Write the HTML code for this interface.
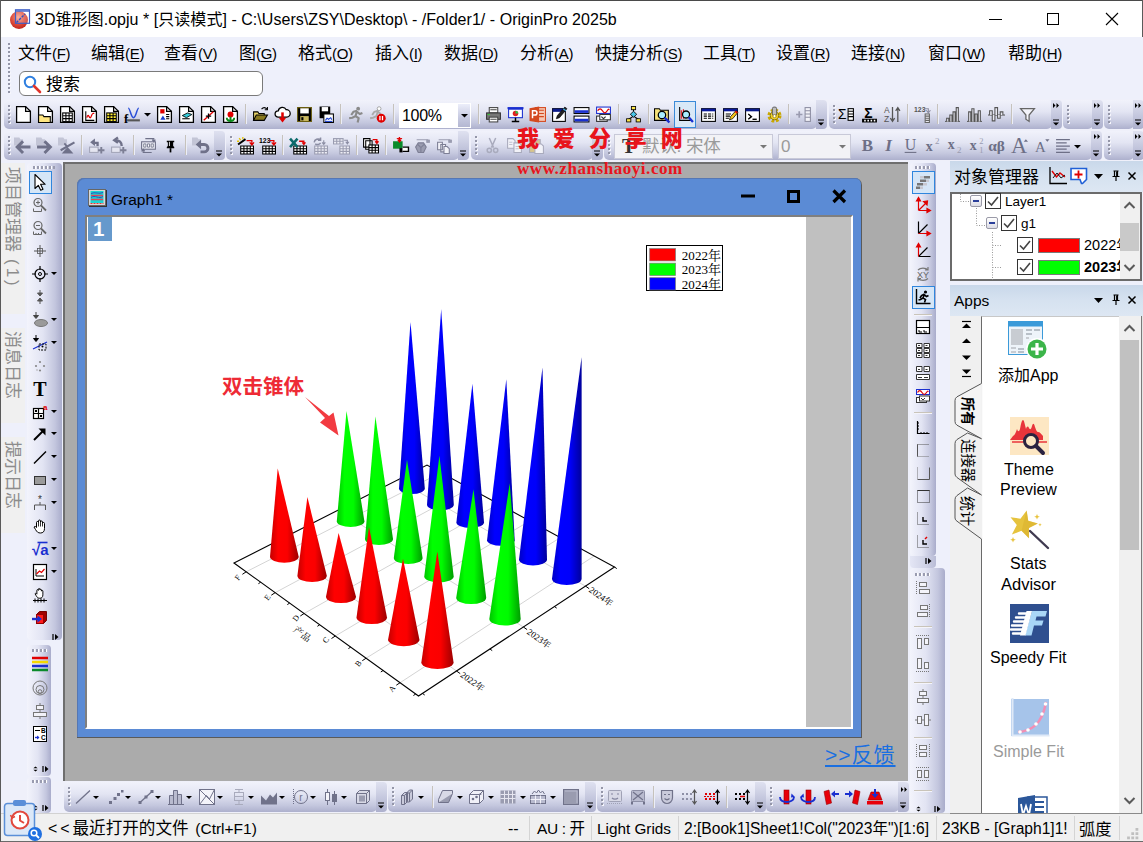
<!DOCTYPE html>
<html lang="zh-CN"><head><meta charset="utf-8"><title>OriginPro 2025b</title>
<style>
*{box-sizing:border-box;margin:0;padding:0}
html,body{width:1143px;height:842px;overflow:hidden;background:#eef0fb}
body{position:relative;font-family:"Liberation Sans","Noto Sans CJK SC",sans-serif;color:#000}
div,span,svg{position:absolute}
svg{overflow:visible}
.t{white-space:nowrap;line-height:1}
.tbh{background:linear-gradient(#f3f4fc 0%,#e2e4f3 45%,#c3c6de 80%,#b2b5d1 100%);border-radius:0 0 5px 5px}
.tbh2{background:linear-gradient(#f1f2fb 0%,#e3e5f3 40%,#c4c7de 78%,#adb0cd 100%);border-radius:5px 5px 5px 5px}
.chev{background:linear-gradient(#dfe1f0 0%,#c6c9df 50%,#adb0cd 100%)}
.tbv{background:linear-gradient(90deg,#f3f4fc 0%,#e2e4f3 45%,#c3c6de 80%,#a9accb 100%)}
.grip{background-image:radial-gradient(circle at 1px 1px,#8d90a6 0.9px,transparent 1.1px);background-size:4px 4px}
.gripv{background-image:linear-gradient(#9496a8 0 2px,transparent 2px),linear-gradient(transparent 0 1px,#f6f6fc 1px 3px,transparent 3px);background-size:2px 4px,3px 4px;background-repeat:repeat-y;background-position:0 0,1px 0;width:3px}
.griph{background-image:linear-gradient(90deg,#9a9cb0 0 2px,#fff 2px 3px,transparent 3px);background-size:4px 3px;height:3px}
.sep{width:1px;background:#c6c2bc;box-shadow:1px 0 0 #eceef8}
.seph{height:1px;background:#c9c4b9;box-shadow:0 1px 0 #f4f4fb}
u{text-decoration:underline;text-underline-offset:2px}
.ttl{font-size:16px}
.mn{font-size:17px}
.mn i{font-style:normal;font-size:15px;letter-spacing:-.3px}
.sf{font-family:"Liberation Serif","Noto Serif CJK SC",serif;fill:#000}
</style></head>
<body>
<div style="left:0px;top:0px;width:1143px;height:37px;background:#fff"></div>
<div style="left:0px;top:0px;width:1143px;height:1px;background:#4a4a4a"></div>
<div style="left:0px;top:0px;width:1px;height:842px;background:#5a5a5a"></div>
<div style="left:1142px;top:0px;width:1px;height:38px;background:#5a5a5a"></div>
<span class="t ttl" style="left:35px;top:12px;font-size:16px;letter-spacing:.04px">3D锥形图.opju * [只读模式] - C:\Users\ZSY\Desktop\ - /Folder1/ - OriginPro 2025b</span>
<svg style="left:9px;top:9px;" width="22" height="22" viewBox="0 0 22 22"><defs><radialGradient id="ag" cx=".45" cy=".35" r=".65"><stop offset="0" stop-color="#f4a08e"/><stop offset=".55" stop-color="#e0503f"/><stop offset="1" stop-color="#c2261b"/></radialGradient></defs><circle cx="10" cy="11" r="9" fill="url(#ag)"/><rect x="6.500" y=".8" width="14" height="13.500" fill="#ffffff" fill-opacity=".18" stroke="#3f5fc6" stroke-width="1.200"/><rect x="6.500" y=".8" width="14" height="2.200" fill="#4a69cc" fill-opacity=".75"/><path d="M7.500 13.500L16 5" stroke="#3050c0" stroke-width="1.400" stroke-dasharray="2.500 1.200"/></svg>
<svg style="left:989px;top:13px;" width="14" height="14" viewBox="0 0 14 14"><path d="M0 6.5H13" stroke="#000" stroke-width="1"/></svg>
<svg style="left:1047px;top:13px;" width="12" height="12" viewBox="0 0 12 12"><rect x=".5" y=".5" width="11" height="11" fill="none" stroke="#000"/></svg>
<svg style="left:1106px;top:13px;" width="13" height="13" viewBox="0 0 13 13"><path d="M0 0L12 12M12 0L0 12" stroke="#000" stroke-width="1.1"/></svg>
<div style="left:1px;top:37px;width:1142px;height:63px;background:#eef0fb"></div>
<div class="gripv" style="left:8px;top:43px;width:3px;height:52px;"></div>
<span class="t mn" style="left:18px;top:45px">文件<i>(<u>F</u>)</i></span>
<span class="t mn" style="left:91px;top:45px">编辑<i>(<u>E</u>)</i></span>
<span class="t mn" style="left:164px;top:45px">查看<i>(<u>V</u>)</i></span>
<span class="t mn" style="left:239px;top:45px">图<i>(<u>G</u>)</i></span>
<span class="t mn" style="left:298px;top:45px">格式<i>(<u>O</u>)</i></span>
<span class="t mn" style="left:375px;top:45px">插入<i>(<u>I</u>)</i></span>
<span class="t mn" style="left:444px;top:45px">数据<i>(<u>D</u>)</i></span>
<span class="t mn" style="left:520px;top:45px">分析<i>(<u>A</u>)</i></span>
<span class="t mn" style="left:595px;top:45px">快捷分析<i>(<u>S</u>)</i></span>
<span class="t mn" style="left:703px;top:45px">工具<i>(<u>T</u>)</i></span>
<span class="t mn" style="left:776px;top:45px">设置<i>(<u>R</u>)</i></span>
<span class="t mn" style="left:851px;top:45px">连接<i>(<u>N</u>)</i></span>
<span class="t mn" style="left:928px;top:45px">窗口<i>(<u>W</u>)</i></span>
<span class="t mn" style="left:1008px;top:45px">帮助<i>(<u>H</u>)</i></span>
<div style="left:19px;top:71px;width:244px;height:25px;background:#fff;border:1px solid #7a7a7a;border-radius:6px"></div>
<svg style="left:23px;top:75px;" width="20" height="20" viewBox="0 0 20 20"><circle cx="7" cy="7" r="5.2" fill="#fff" stroke="#2f7fe0" stroke-width="2"/><path d="M11 11L17 17" stroke="#e0352b" stroke-width="2.6" stroke-linecap="round"/></svg>
<span class="t" style="left:46px;top:76px;font-size:17px;">搜索</span>
<div style="left:1px;top:99px;width:1142px;height:62px;background:#eff0fa"></div>
<div class="tbh2" style="left:4px;top:100px;width:813px;height:29px;"></div><div class="chev" style="left:816px;top:100px;width:11px;height:29px;border-radius:0 4px 4px 0"></div><svg style="left:818px;top:120px;" width="7" height="7" viewBox="0 0 7 7"><path d="M0 0H6" stroke="#000" stroke-width="1"/><path d="M0 2.5H6L3 5.5Z" fill="#000"/></svg><div class="gripv" style="left:8px;top:105px;width:3px;height:19px;"></div>
<div class="tbh2" style="left:829px;top:100px;width:223px;height:29px;"></div><div class="chev" style="left:1051px;top:100px;width:11px;height:29px;border-radius:0 4px 4px 0"></div><svg style="left:1053px;top:120px;" width="7" height="7" viewBox="0 0 7 7"><path d="M0 0H6" stroke="#000" stroke-width="1"/><path d="M0 2.5H6L3 5.5Z" fill="#000"/></svg><div class="gripv" style="left:833px;top:105px;width:3px;height:19px;"></div>
<div class="tbh2" style="left:1063px;top:100px;width:30px;height:29px;"></div><div class="chev" style="left:1092px;top:100px;width:11px;height:29px;border-radius:0 4px 4px 0"></div><svg style="left:1094px;top:120px;" width="7" height="7" viewBox="0 0 7 7"><path d="M0 0H6" stroke="#000" stroke-width="1"/><path d="M0 2.5H6L3 5.5Z" fill="#000"/></svg><div class="gripv" style="left:1067px;top:105px;width:3px;height:19px;"></div>
<div class="tbh2" style="left:1104px;top:100px;width:30px;height:29px;"></div><div class="chev" style="left:1133px;top:100px;width:11px;height:29px;border-radius:0 4px 4px 0"></div><svg style="left:1135px;top:120px;" width="7" height="7" viewBox="0 0 7 7"><path d="M0 0H6" stroke="#000" stroke-width="1"/><path d="M0 2.5H6L3 5.5Z" fill="#000"/></svg><div class="gripv" style="left:1108px;top:105px;width:3px;height:19px;"></div>
<div class="tbh2" style="left:4px;top:131px;width:211px;height:29px;"></div><div class="chev" style="left:214px;top:131px;width:11px;height:29px;border-radius:0 4px 4px 0"></div><svg style="left:216px;top:151px;" width="7" height="7" viewBox="0 0 7 7"><path d="M0 0H6" stroke="#000" stroke-width="1"/><path d="M0 2.5H6L3 5.5Z" fill="#000"/></svg><div class="gripv" style="left:8px;top:136px;width:3px;height:19px;"></div>
<div class="tbh2" style="left:226px;top:131px;width:233px;height:29px;"></div><div class="chev" style="left:458px;top:131px;width:11px;height:29px;border-radius:0 4px 4px 0"></div><svg style="left:460px;top:151px;" width="7" height="7" viewBox="0 0 7 7"><path d="M0 0H6" stroke="#000" stroke-width="1"/><path d="M0 2.5H6L3 5.5Z" fill="#000"/></svg><div class="gripv" style="left:230px;top:136px;width:3px;height:19px;"></div>
<div class="tbh2" style="left:471px;top:131px;width:122px;height:29px;"></div><div class="chev" style="left:592px;top:131px;width:11px;height:29px;border-radius:0 4px 4px 0"></div><svg style="left:594px;top:151px;" width="7" height="7" viewBox="0 0 7 7"><path d="M0 0H6" stroke="#000" stroke-width="1"/><path d="M0 2.5H6L3 5.5Z" fill="#000"/></svg><div class="gripv" style="left:475px;top:136px;width:3px;height:19px;"></div>
<div class="tbh2" style="left:604px;top:131px;width:488px;height:29px;"></div><div class="chev" style="left:1091px;top:131px;width:11px;height:29px;border-radius:0 4px 4px 0"></div><svg style="left:1093px;top:151px;" width="7" height="7" viewBox="0 0 7 7"><path d="M0 0H6" stroke="#000" stroke-width="1"/><path d="M0 2.5H6L3 5.5Z" fill="#000"/></svg><div class="gripv" style="left:608px;top:136px;width:3px;height:19px;"></div>
<div class="tbh2" style="left:1104px;top:131px;width:30px;height:29px;"></div><div class="chev" style="left:1133px;top:131px;width:11px;height:29px;border-radius:0 4px 4px 0"></div><svg style="left:1135px;top:151px;" width="7" height="7" viewBox="0 0 7 7"><path d="M0 0H6" stroke="#000" stroke-width="1"/><path d="M0 2.5H6L3 5.5Z" fill="#000"/></svg><div class="gripv" style="left:1108px;top:136px;width:3px;height:19px;"></div>
<div style="left:1px;top:161px;width:62px;height:652px;background:#eef0fb"></div>
<div style="left:1px;top:163px;width:24px;height:151px;background:#f0f0f0"></div>
<div style="left:1px;top:328px;width:24px;height:95px;background:#f0f0f0"></div>
<div style="left:1px;top:437px;width:24px;height:96px;background:#f0f0f0"></div>
<div class="tbv" style="left:27px;top:163px;width:35px;height:477px;border-radius:4px"></div>
<div class="tbv" style="left:27px;top:645px;width:24px;height:131px;border-radius:4px"></div>
<div style="left:63px;top:162px;width:845px;height:619px;background:#ababab;border-left:2px solid #6e6e6e;border-top:2px solid #6e6e6e"></div>
<div style="left:77px;top:178px;width:785px;height:560px;background:#5a5a5a;border-radius:7px 7px 0 0"></div>
<div style="left:77px;top:178px;width:784px;height:559px;background:#5b8bd5;border-radius:7px 6px 0 0;box-shadow:inset 1px 1px 0 #5577b4"></div>
<div style="left:85px;top:215px;width:768px;height:514px;background:#c0c0c0;border-top:2px solid #7f7f7f;border-left:2px solid #7f7f7f;border-right:2px solid #fff;border-bottom:2px solid #fff"></div>
<div style="left:87px;top:217px;width:719px;height:510px;background:#fff"></div>
<div style="left:88px;top:217px;width:24px;height:24px;background:#6699cc"></div>
<span class="t" style="left:93px;top:219px;font-size:20.5px;color:#fff;font-weight:bold">1</span>
<span class="t" style="left:111px;top:192px;font-size:15.5px;">Graph1 *</span>
<svg style="left:88px;top:189px;" width="19" height="18" viewBox="0 0 19 18"><rect x="1" y="1" width="18" height="17" fill="#333"/><rect x=".5" y=".5" width="17" height="16" fill="#d8d8d8" stroke="#666"/><rect x="2.500" y="2" width="13" height="12" fill="#19d6d2"/><path d="M3 6.500h12M3 10.500h12" stroke="#e0455a" stroke-width="1.400"/><path d="M3 8.500c4-3 8 2 12-1M3 4.500c4-2 8 1 12-1" stroke="#2a4fc0" stroke-width="1" fill="none"/><path d="M2.500 14.500h13" stroke="#e33" stroke-dasharray="2 1"/></svg>
<svg style="left:741px;top:189px;" width="16" height="14" viewBox="0 0 16 14"><path d="M0 7H14" stroke="#000" stroke-width="3"/></svg>
<svg style="left:787px;top:190px;" width="14" height="14" viewBox="0 0 14 14"><rect x="1.5" y="1.5" width="10" height="10" fill="none" stroke="#000" stroke-width="3"/></svg>
<svg style="left:832px;top:189px;" width="15" height="15" viewBox="0 0 15 15"><path d="M1.5 1.5L13 13M13 1.5L1.5 13" stroke="#000" stroke-width="3.2"/></svg>
<span class="t" style="left:825px;top:744px;font-size:21px;color:#1a6fe0;text-decoration:underline;text-underline-offset:3px;letter-spacing:1px">&gt;&gt;反馈</span>
<div style="left:1px;top:781px;width:907px;height:32px;background:#eff0fa"></div>
<div style="left:1px;top:813px;width:1142px;height:29px;background:#f0f0f0;border-top:1px solid #d2d2d2;border-bottom:1px solid #6a6a6a"></div>
<div style="left:950px;top:813px;width:192px;height:1px;background:#8a8a8a"></div>
<div style="left:908px;top:161px;width:235px;height:652px;background:#eef0fb"></div>
<div class="tbv" style="left:910px;top:163px;width:26px;height:393px;border-radius:4px"></div>
<div class="tbv" style="left:910px;top:568px;width:35px;height:245px;border-radius:4px"></div>
<div style="left:910px;top:556px;width:26px;height:12px;border-radius:0 0 4px 4px;background:linear-gradient(90deg,#e4e6f5,#cfd2e6 60%,#b9bcd6)"></div>
<div style="left:674px;top:101px;width:22px;height:27px;background:#d9e8f7;border:1px solid #3b8ad8"></div>
<svg style="left:14.5px;top:105.5px;" width="17" height="17" viewBox="0 0 16 16"><path d="M1.5 .5h8.5l4.500 4.500v10.500h-13z" fill="#fff" stroke="#000" stroke-width="1.200"/><path d="M10 .5v4.500h4.500" fill="none" stroke="#000" stroke-width="1.200"/></svg>
<svg style="left:36.5px;top:105.5px;" width="17" height="17" viewBox="0 0 16 16"><path d="M1.5 .5h8.5l4.500 4.500v10.500h-13z" fill="#fff" stroke="#000" stroke-width="1.200"/><path d="M10 .5v4.500h4.500" fill="none" stroke="#000" stroke-width="1.200"/><path d="M1.5 8.5h4l1 1.5h6v5.5h-11z" fill="#ffe680" stroke="#000"/></svg>
<svg style="left:58.5px;top:105.5px;" width="17" height="17" viewBox="0 0 16 16"><path d="M1.5 .5h8.5l4.500 4.500v10.500h-13z" fill="#fff" stroke="#000" stroke-width="1.200"/><path d="M10 .5v4.500h4.500" fill="none" stroke="#000" stroke-width="1.200"/><rect x="3" y="6" width="10" height="9" fill="#000"/><path d="M4 7h2v1.6h-2zM7 7h2v1.6h-2zM10 7h2v1.6h-2zM4 9.7h2v1.6h-2zM7 9.7h2v1.6h-2zM10 9.7h2v1.6h-2zM4 12.4h2v1.6h-2zM7 12.4h2v1.6h-2zM10 12.4h2v1.6h-2z" fill="#fff"/></svg>
<svg style="left:80.5px;top:105.5px;" width="17" height="17" viewBox="0 0 16 16"><path d="M1.5 .5h8.5l4.500 4.500v10.500h-13z" fill="#fff" stroke="#000" stroke-width="1.200"/><path d="M10 .5v4.500h4.500" fill="none" stroke="#000" stroke-width="1.200"/><path d="M4.5 5v8.5h8" fill="none" stroke="#000"/><path d="M5.5 11c1.5-6 2.5 3 4-1s1.500-3 3-3" fill="none" stroke="#e00000" stroke-width="1.2"/></svg>
<svg style="left:102.5px;top:105.5px;" width="17" height="17" viewBox="0 0 16 16"><path d="M1.5 .5h8.5l4.500 4.500v10.500h-13z" fill="#fff" stroke="#000" stroke-width="1.200"/><path d="M10 .5v4.500h4.500" fill="none" stroke="#000" stroke-width="1.200"/><rect x="3" y="6" width="10" height="9" fill="#000"/><path d="M4 7h2v1.6h-2zM7 7h2v1.6h-2zM10 7h2v1.6h-2zM4 9.7h2v1.6h-2zM7 9.7h2v1.6h-2zM10 9.7h2v1.6h-2zM4 12.4h2v1.6h-2zM7 12.4h2v1.6h-2zM10 12.4h2v1.6h-2z" fill="#ffee33"/></svg>
<svg style="left:124.5px;top:105.5px;" width="17" height="17" viewBox="0 0 16 16"><path d="M3 2c2 0 2.500 9 5 9s3-9 5-9" fill="none" stroke="#2a4fd8" stroke-width="1.4"/><path d="M2 13.500h12" stroke="#555" stroke-width="2"/><text x="-1" y="16" font-size="12" font-weight="bold" font-family="Liberation Serif,serif">f</text></svg>
<svg style="left:155.5px;top:105.5px;" width="17" height="17" viewBox="0 0 16 16"><path d="M1.5 .5h8.5l4.500 4.500v10.500h-13z" fill="#fff" stroke="#000" stroke-width="1.200"/><path d="M10 .5v4.500h4.500" fill="none" stroke="#000" stroke-width="1.200"/><rect x="4" y="3" width="4" height="4" fill="#e00000"/><path d="M4 13l2.500-4 2.500 4z" fill="#1a3fd0"/><path d="M9.500 8h3M9.500 10h3M9.500 12h3" stroke="#000"/></svg>
<svg style="left:177.5px;top:105.5px;" width="17" height="17" viewBox="0 0 16 16"><path d="M1.5 .5h8.5l4.500 4.500v10.500h-13z" fill="#fff" stroke="#000" stroke-width="1.200"/><path d="M10 .5v4.500h4.500" fill="none" stroke="#000" stroke-width="1.200"/><path d="M4 9l5-2.500 4 1.500-5 3z" fill="#35c9d6" stroke="#000" stroke-width=".8"/><path d="M4 12h7" stroke="#000"/></svg>
<svg style="left:199.5px;top:105.5px;" width="17" height="17" viewBox="0 0 16 16"><path d="M1.5 .5h8.5l4.500 4.500v10.500h-13z" fill="#fff" stroke="#000" stroke-width="1.200"/><path d="M10 .5v4.500h4.500" fill="none" stroke="#000" stroke-width="1.200"/><path d="M3.500 13.500l9-8" stroke="#e00000" stroke-width="1.3"/><path d="M8 7v5M5.500 9.500h5" stroke="#000" stroke-width="1.2"/></svg>
<svg style="left:221.5px;top:105.5px;" width="17" height="17" viewBox="0 0 16 16"><path d="M1.5 .5h8.5l4.500 4.500v10.500h-13z" fill="#fff" stroke="#000" stroke-width="1.200"/><path d="M10 .5v4.500h4.500" fill="none" stroke="#000" stroke-width="1.200"/><circle cx="8" cy="8" r="2.800" fill="#e00000"/><path d="M8 10v5M8 14c-2 0-3.500-1-3.500-3M8 14c2 0 3.500-1 3.500-3" stroke="#0a8a1a" stroke-width="1.800" fill="none"/></svg>
<svg style="left:251.5px;top:105.5px;" width="17" height="17" viewBox="0 0 16 16"><path d="M1.500 13.500v-8h4l1 1.500h5v2" fill="#e8d46a" stroke="#000"/><path d="M1.500 13.500l2.500-5h10.500l-3 5z" fill="#8a7a20" stroke="#000"/><path d="M9 3c1.500-2 3.500-2 5 0" fill="none" stroke="#000"/><path d="M14.500 1v2.500h-2.500" fill="none" stroke="#000"/></svg>
<svg style="left:273.5px;top:105.5px;" width="17" height="17" viewBox="0 0 16 16"><path d="M4 10.500a3 3 0 0 1 0-6 4 4 0 0 1 7.500-1 3.200 3.200 0 0 1 .5 7z" fill="#fff" stroke="#000" stroke-width="1.200"/><path d="M8 6v6" stroke="#e00000" stroke-width="2.400"/><path d="M4.500 11h7l-3.500 4.500z" fill="#e00000"/></svg>
<svg style="left:295.5px;top:105.5px;" width="17" height="17" viewBox="0 0 16 16"><path d="M1.500 1.500h13v13h-13z" fill="#000"/><rect x="4" y="2" width="8" height="5" fill="#fff"/><rect x="4" y="9.500" width="8" height="5" fill="#c8b860"/><rect x="5" y="10.500" width="2" height="3" fill="#000"/><path d="M1.500 1.500h13v13h-13z" fill="none" stroke="#6b5e10" stroke-width="1"/></svg>
<svg style="left:317.5px;top:105.5px;" width="17" height="17" viewBox="0 0 16 16"><path d="M1.500 .5h10v11h-10z" fill="#000"/><rect x="3.500" y="1" width="6" height="4" fill="#fff"/><rect x="5.500" y="7.500" width="9" height="8" fill="#fff" stroke="#000"/><path d="M7 13.500l1.500-2 1.500 1 2-1.500 1 2" fill="none" stroke="#1a3fd0"/><path d="M6.500 14.500h7" stroke="#1a3fd0"/></svg>
<svg style="left:346.5px;top:105.5px;" width="17" height="17" viewBox="0 0 16 16"><circle cx="10.500" cy="2.500" r="1.800" fill="#8a8a8a"/><path d="M9.500 4.500l-3.500 1-2 3M9.500 4.500l-1.500 5 3 2-1 4M8 9.500l-3 1.500-3 .500M9.500 5.500l2.500 2 2.500-1" fill="none" stroke="#8a8a8a" stroke-width="2" stroke-linejoin="round"/></svg>
<svg style="left:368.5px;top:105.5px;" width="17" height="17" viewBox="0 0 16 16"><g transform="translate(-1,0)"><circle cx="10.500" cy="2.500" r="1.800" fill="#fff" stroke="#999" stroke-width=".8"/><path d="M9.500 4.500l-3.500 1-2 3M9.500 4.500l-1.500 5 3 2M8 9.500l-3 1.500-3 .500M9.500 5.500l2.500 2" fill="none" stroke="#aaa" stroke-width="1.800" stroke-linejoin="round"/></g><circle cx="11.500" cy="11.500" r="4.200" fill="#e00000"/><path d="M10.300 9.500v4M12.700 9.500v4" stroke="#fff" stroke-width="1.200"/></svg>
<svg style="left:484.5px;top:105.5px;" width="17" height="17" viewBox="0 0 16 16"><rect x="4" y="1.500" width="8" height="5" fill="#fff" stroke="#444"/><rect x="1.500" y="6.500" width="13" height="6" fill="#777" stroke="#333"/><rect x="4" y="10.500" width="8" height="4.500" fill="#fff" stroke="#444"/><path d="M5 3.500h6M5 12.500h6" stroke="#444"/><rect x="2.500" y="7.500" width="2" height="1" fill="#3c3"/></svg>
<svg style="left:506.5px;top:105.5px;" width="17" height="17" viewBox="0 0 16 16"><rect x=".500" y="1" width="15" height="2" fill="#1a2fd0"/><rect x="1.500" y="3" width="13" height="8" fill="#fff" stroke="#1a2fd0"/><circle cx="8" cy="7" r="2.600" fill="#e02020"/><path d="M8 7v-2.600a2.600 2.600 0 0 1 2.600 2.600z" fill="#2fc24a"/><path d="M8 11v3M4.500 14.500h7" stroke="#000" stroke-width="1.400"/></svg>
<svg style="left:528.5px;top:105.5px;" width="17" height="17" viewBox="0 0 16 16"><rect x="6" y="1.500" width="9.500" height="13" fill="#f4c7b4" stroke="#d4491f"/><path d="M9 4h5M9 7h5M9 10h5" stroke="#d4491f"/><path d="M.5 2l9-1.500v15l-9-1.500z" fill="#d4491f"/><path d="M3.300 11.500v-7h2.200a2 2 0 0 1 0 4h-2.200" fill="none" stroke="#fff" stroke-width="1.400"/></svg>
<svg style="left:550.5px;top:105.5px;" width="17" height="17" viewBox="0 0 16 16"><rect x="1.500" y="2.500" width="12" height="12" fill="#fff" stroke="#000"/><rect x="1.500" y="2.500" width="12" height="3" fill="#0a1a8a"/><path d="M5 12l1-3 7-8 2 1.500-7 8.500z" fill="#222" stroke="#000" stroke-width=".6"/><path d="M11.500 2.500l2.500 2" stroke="#4ad" stroke-width="1.200"/></svg>
<svg style="left:572.5px;top:105.5px;" width="17" height="17" viewBox="0 0 16 16"><rect x="1" y="1.500" width="14" height="5.500" fill="#fff" stroke="#000"/><rect x="1.500" y="4" width="13" height="2.500" fill="#1a2fd0"/><rect x="1" y="9.500" width="14" height="5.500" fill="#fff" stroke="#000"/><rect x="1.500" y="12" width="13" height="2.500" fill="#1a2fd0"/></svg>
<svg style="left:594.5px;top:105.5px;" width="17" height="17" viewBox="0 0 16 16"><rect x="1.500" y="1" width="13" height="6" fill="#fff" stroke="#1a2fd0"/><path d="M2.500 4.500c1.500-2.500 3-2.500 4.500 0s3 2.500 4.500 0 1.500-1 2-1.500" fill="none" stroke="#e00000" stroke-width="1.200"/><rect x="1.500" y="9.500" width="10" height="5" fill="#fff" stroke="#333"/><rect x="4.500" y="8" width="10" height="5" fill="#fff" stroke="#333"/><path d="M6 10l2 2 2-2" fill="none" stroke="#333"/></svg>
<svg style="left:624.5px;top:105.5px;" width="17" height="17" viewBox="0 0 16 16"><path d="M8 2.500v3M8 9.500l-4.500 3M8 9.500l4.500 3" stroke="#000"/><rect x="6" y=".5" width="4" height="3" fill="#ffe84a" stroke="#000" stroke-width=".8"/><path d="M8 5l3 2.800-3 2.800-3-2.800z" fill="#49c6ea" stroke="#000" stroke-width=".8"/><rect x="1.500" y="12" width="4" height="3" fill="#ffe84a" stroke="#000" stroke-width=".8"/><rect x="10.500" y="12" width="4" height="3" fill="#ffe84a" stroke="#000" stroke-width=".8"/></svg>
<svg style="left:653.5px;top:105.5px;" width="17" height="17" viewBox="0 0 16 16"><path d="M.5 13.500v-11h4.500l1 1.500h7.500v9.500z" fill="#f5e27a" stroke="#000"/><circle cx="7.500" cy="8.500" r="3.500" fill="#aef" stroke="#000" stroke-width="1.200"/><path d="M10 11l4.500 4.500" stroke="#1a2fd0" stroke-width="2.200"/></svg>
<svg style="left:699.5px;top:105.5px;" width="17" height="17" viewBox="0 0 16 16"><rect x="1.500" y="2.500" width="13" height="12" fill="#fff" stroke="#000"/><rect x="1.500" y="2.500" width="13" height="2.500" fill="#0a1a9a"/><path d="M3.500 7.500h9M3.500 9.500h9M3.500 11.500h9" stroke="#000" stroke-dasharray="3 1"/></svg>
<svg style="left:721.5px;top:105.5px;" width="17" height="17" viewBox="0 0 16 16"><rect x="1.500" y="2.500" width="13" height="12" fill="#fff" stroke="#000"/><rect x="1.500" y="2.500" width="13" height="2.500" fill="#0a1a9a"/><path d="M3.500 7.500h5M3.500 9.500h4M3.500 11.500h3" stroke="#000"/><path d="M7 13l1-3 5-5.500 2 1.500-5 6z" fill="#f5c518" stroke="#000" stroke-width=".7"/><path d="M12.500 5l2 1.500" stroke="#e00000" stroke-width="1.500"/></svg>
<svg style="left:743.5px;top:105.5px;" width="17" height="17" viewBox="0 0 16 16"><rect x="1.500" y="2.500" width="13" height="12" fill="#fff" stroke="#000"/><rect x="1.500" y="2.500" width="13" height="2.500" fill="#0a1a8a"/><path d="M4 7.500l3 2.500-3 2.500" fill="none" stroke="#000" stroke-width="1.300"/><path d="M8 12.500h4" stroke="#000" stroke-width="1.300"/></svg>
<svg style="left:765.5px;top:105.5px;" width="17" height="17" viewBox="0 0 16 16"><circle cx="8" cy="9" r="5" fill="none" stroke="#c9a800" stroke-width="3.200" stroke-dasharray="2.400 1.530"/><circle cx="8" cy="9" r="4" fill="#f1d22b" stroke="#7a6500" stroke-width=".8"/><rect x="6" y="1" width="4" height="8" rx="1.500" fill="#bdbdbd" stroke="#555" stroke-width=".8"/><circle cx="8" cy="9.500" r="1.500" fill="#fff" stroke="#7a6500" stroke-width=".6"/></svg>
<svg style="left:794.5px;top:105.5px;" width="17" height="17" viewBox="0 0 16 16"><path d="M1 8h6M4 5v6" stroke="#9a9bb0" stroke-width="1.600"/><rect x="9.500" y="1.500" width="5" height="13" fill="#f2f2f8" stroke="#8e8fa3"/><path d="M9.500 4.500h5M9.500 7.500h5M9.500 10.500h5" stroke="#8e8fa3"/></svg>
<svg style="left:837.5px;top:105.5px;" width="17" height="17" viewBox="0 0 16 16"><text x="0" y="12" font-size="13" font-family="Liberation Sans,sans-serif">Σ</text><rect x="9.500" y="2.500" width="5" height="11" fill="#fff" stroke="#000"/><path d="M9.500 5h5M9.500 7.500h5M9.500 10h5" stroke="#000"/></svg>
<svg style="left:860.5px;top:105.5px;" width="17" height="17" viewBox="0 0 16 16"><text x="3" y="11" font-size="13" font-weight="bold" font-family="Liberation Sans,sans-serif">Σ</text><rect x="1" y="12" width="14" height="3.500" fill="#000"/><path d="M3 13h1.500v1.500h-1.500zM6 13h1.500v1.500h-1.500zM9 13h1.500v1.500h-1.500zM12 13h1.500v1.500h-1.500z" fill="#fff"/></svg>
<svg style="left:883.5px;top:105.5px;" width="17" height="17" viewBox="0 0 16 16"><text x="0" y="7" font-size="8" font-family="Liberation Sans,sans-serif" fill="#555">A</text><text x="0" y="15" font-size="8" font-family="Liberation Sans,sans-serif" fill="#555">Z</text><path d="M8 1v13M6 11.500l2 3 2-3" fill="none" stroke="#555" stroke-width="1.200"/><path d="M13 15v-13M11 4.500l2-3 2 3" fill="none" stroke="#555" stroke-width="1.200"/></svg>
<svg style="left:913.5px;top:105.5px;" width="17" height="17" viewBox="0 0 16 16"><text x="0" y="6" font-size="6.500" font-weight="bold" font-family="Liberation Sans,sans-serif" fill="#555">123</text><path d="M10 2.500h3.500v3M11.500 4l2 2.500 2-2.500" fill="none" stroke="#8e8fa3"/><rect x="10.500" y="7.500" width="4" height="8" fill="#f2f2f8" stroke="#666"/><path d="M10.500 9.500h4M10.500 11.500h4M10.500 13.500h4" stroke="#666"/></svg>
<svg style="left:943.5px;top:105.5px;" width="17" height="17" viewBox="0 0 16 16"><path d="M1 14.500h14" stroke="#555"/><path d="M2.500 14.500v-3h2v3M5.500 14.500v-6h2v6M8.500 14.500v-9h2v9M11.500 14.500v-13h2v13" fill="#e9e9f2" stroke="#555"/></svg>
<svg style="left:965.5px;top:105.5px;" width="17" height="17" viewBox="0 0 16 16"><path d="M1 14.500h14" stroke="#555"/><path d="M2.500 14.500v-9h2v9M5.500 14.500v-12h2v12M8.500 14.500v-7h2v7M11.500 14.500v-10h2v10" fill="#e9e9f2" stroke="#555"/></svg>
<svg style="left:987.5px;top:105.5px;" width="17" height="17" viewBox="0 0 16 16"><path d="M0 8.500h16" stroke="#555"/><path d="M1.500 8.500v-4h2.500v4M4 8.500v5.500h2.500v-5.500M6.500 8.500v-7h2.500v7M9 8.500v3h2.500v-3M11.500 8.500v-3h2.500v3" fill="#e9e9f2" stroke="#555"/></svg>
<svg style="left:1018.5px;top:105.5px;" width="17" height="17" viewBox="0 0 16 16"><path d="M1.500 2.500h13l-5 6v6l-3-2v-4z" fill="#f4f4fa" stroke="#666" stroke-width="1.200"/></svg>
<svg style="left:676.5px;top:105.5px;" width="17" height="17" viewBox="0 0 16 16"><path d="M2.500 1v12.500h11" fill="none" stroke="#000"/><path d="M4 4v8M6 3v9" stroke="#e00000"/><circle cx="8.500" cy="8" r="3.300" fill="#aef" stroke="#000" stroke-width="1.200"/><path d="M11 10.500l4 4.500" stroke="#1a2fd0" stroke-width="2.200"/></svg>
<svg style="left:144px;top:113px;" width="7" height="4" viewBox="0 0 7 4"><path d="M0 0h7l-3.500 3.500z" fill="#000"/></svg>
<div class="sep" style="left:245px;top:104px;width:1px;height:20px;"></div>
<div class="sep" style="left:340px;top:104px;width:1px;height:20px;"></div>
<div class="sep" style="left:393px;top:104px;width:1px;height:20px;"></div>
<div class="sep" style="left:478px;top:104px;width:1px;height:20px;"></div>
<div class="sep" style="left:618px;top:104px;width:1px;height:20px;"></div>
<div class="sep" style="left:648px;top:104px;width:1px;height:20px;"></div>
<div class="sep" style="left:788px;top:104px;width:1px;height:20px;"></div>
<div class="sep" style="left:907px;top:104px;width:1px;height:20px;"></div>
<div class="sep" style="left:937px;top:104px;width:1px;height:20px;"></div>
<div class="sep" style="left:1011px;top:104px;width:1px;height:20px;"></div>
<div style="left:399px;top:103px;width:72px;height:25px;background:#fff"></div>
<div style="left:458px;top:104px;width:12px;height:23px;background:linear-gradient(#eceefa,#c6c9e0 60%,#b4b7d2)"></div>
<svg style="left:461px;top:114px;" width="7" height="4" viewBox="0 0 7 4"><path d="M0 0h7l-3.500 3.500z" fill="#000"/></svg>
<span class="t" style="left:402px;top:108px;font-size:16px;letter-spacing:-.3px">100%</span>
<svg style="left:1053px;top:103px;" width="7" height="5" viewBox="0 0 7 5"><path d="M0 0l2.500 2.500-2.500 2.500zM3.500 0l2.500 2.500-2.500 2.500z" fill="#000"/></svg>
<svg style="left:1094px;top:103px;" width="7" height="5" viewBox="0 0 7 5"><path d="M0 0l2.500 2.500-2.500 2.500zM3.500 0l2.500 2.500-2.500 2.500z" fill="#000"/></svg>
<svg style="left:1135px;top:103px;" width="7" height="5" viewBox="0 0 7 5"><path d="M0 0l2.500 2.500-2.500 2.500zM3.500 0l2.500 2.500-2.500 2.500z" fill="#000"/></svg>
<svg style="left:13.5px;top:136.5px;" width="17" height="17" viewBox="0 0 16 16"><path d="M0 .5h5l1 1.500h2.500v6h-8.500z" fill="#c3c5d6" stroke="none"/><path d="M15.500 9.500h-11.500M8.500 4l-5.500 5.500 5.500 5.500" fill="none" stroke="#6f7189" stroke-width="2.800"/></svg>
<svg style="left:35.5px;top:136.5px;" width="17" height="17" viewBox="0 0 16 16"><path d="M0 .5h5l1 1.500h2.500v6h-8.500z" fill="#c3c5d6" stroke="none"/><path d="M1 9.500h11.500M8 4l5.500 5.500-5.500 5.500" fill="none" stroke="#6f7189" stroke-width="2.800"/></svg>
<svg style="left:57.5px;top:136.5px;" width="17" height="17" viewBox="0 0 16 16"><path d="M0 .5h5l1 1.500h2.500v6h-8.500z" fill="#c3c5d6" stroke="none"/><path d="M2.500 12.500l13-7.500" stroke="#6f7189" stroke-width="2"/><path d="M3.500 15.500l5.500-6 5.500 6z" fill="#6f7189"/><path d="M6 6l3 3.500" stroke="#6f7189" stroke-width="1.600"/></svg>
<svg style="left:87.5px;top:136.5px;" width="17" height="17" viewBox="0 0 16 16"><path d="M9 8.500v-3h-3" fill="none" stroke="#6f7189" stroke-width="2.200"/><path d="M6.500 1.500v7l-4.500-3.500z" fill="#6f7189"/><rect x="1.500" y="9.500" width="8" height="5" fill="#e4e5f0" stroke="#a3a5b8"/><path d="M9.500 12.500h6M12.500 9.500v6" stroke="#7d7f95" stroke-width="1.800"/></svg>
<svg style="left:109.5px;top:136.5px;" width="17" height="17" viewBox="0 0 16 16"><path d="M11 8.500c0-4-2-5.500-6-5.500M7.500 .5l-3.500 2.500 3.500 2.500" fill="none" stroke="#6f7189" stroke-width="2.200"/><rect x="1.500" y="9.500" width="8" height="5" fill="#e4e5f0" stroke="#a3a5b8"/><path d="M9.500 12.500h6M12.500 9.500v6" stroke="#7d7f95" stroke-width="1.800"/></svg>
<svg style="left:139.5px;top:136.5px;" width="17" height="17" viewBox="0 0 16 16"><rect x="1.500" y="4.500" width="13" height="7" fill="#e9eaf3" stroke="#6f7189"/><path d="M3.500 6.500h2v3h-2zM7 6.500h2v3h-2zM10.500 6.500h2v3h-2z" fill="#fff" stroke="#6f7189" stroke-width=".8"/><path d="M5 1.500h8v2.500M11.500 2.500l1.500 2 1.500-2M11 14.500h-8v-2.500M1.500 13.500l1.500-2 1.500 2" fill="none" stroke="#6f7189"/></svg>
<svg style="left:161.5px;top:136.5px;" width="17" height="17" viewBox="0 0 16 16"><path d="M4.500 3.500h7v1.500h-1v3.500l1 1v1h-7v-1l1-1v-3.500h-1z" fill="#000"/><path d="M7 4.500v4" stroke="#fff" stroke-width=".8"/><path d="M8 10.500v4" stroke="#000" stroke-width="1.600"/></svg>
<svg style="left:191.5px;top:136.5px;" width="17" height="17" viewBox="0 0 16 16"><path d="M0 .5h5l1 1.500h2.500v6h-8.500z" fill="#c3c5d6" stroke="none"/><path d="M7 7h4.500a3.500 3.500 0 0 1 0 7h-3.500" fill="none" stroke="#6f7189" stroke-width="2.800"/><path d="M8.500 2.500l-5 4.500 5 4.500z" fill="#6f7189"/></svg>
<svg style="left:236.5px;top:136.5px;" width="17" height="17" viewBox="0 0 16 16"><rect x="3" y="8" width="13" height="8.5" fill="#000"/><path d="M4 9.0h2v1.5h-2zM7 9.0h2v1.5h-2zM10 9.0h2v1.5h-2zM13 9.0h2v1.5h-2zM4 11.5h2v1.5h-2zM7 11.5h2v1.5h-2zM10 11.5h2v1.5h-2zM13 11.5h2v1.5h-2zM4 14.0h2v1.5h-2zM7 14.0h2v1.5h-2zM10 14.0h2v1.5h-2zM13 14.0h2v1.5h-2z" fill="#fff"/><path d="M1 7l7-5" stroke="#000" stroke-width="1.800"/><path d="M2 1l1.500 2M5.500 0v2M0 4h2" stroke="#e6c400" stroke-width="1.200"/><path d="M9 3.500h5v3M12 5l2 2.500 2-2.500" fill="none" stroke="#e00000" stroke-width="1.200"/></svg>
<svg style="left:258.5px;top:136.5px;" width="17" height="17" viewBox="0 0 16 16"><rect x="3" y="8" width="13" height="8.5" fill="#000"/><path d="M4 9.0h2v1.5h-2zM7 9.0h2v1.5h-2zM10 9.0h2v1.5h-2zM13 9.0h2v1.5h-2zM4 11.5h2v1.5h-2zM7 11.5h2v1.5h-2zM10 11.5h2v1.5h-2zM13 11.5h2v1.5h-2zM4 14.0h2v1.5h-2zM7 14.0h2v1.5h-2zM10 14.0h2v1.5h-2zM13 14.0h2v1.5h-2z" fill="#fff"/><text x="0" y="6" font-size="6.500" font-weight="bold" font-family="Liberation Sans,sans-serif">123</text><path d="M10 3.500h4v3M12 5l2 2.500 2-2.500" fill="none" stroke="#e00000" stroke-width="1.200"/></svg>
<svg style="left:288.5px;top:136.5px;" width="17" height="17" viewBox="0 0 16 16"><rect x="4" y="8" width="13" height="8.5" fill="#000"/><path d="M5 9.0h2v1.5h-2zM8 9.0h2v1.5h-2zM11 9.0h2v1.5h-2zM14 9.0h2v1.5h-2zM5 11.5h2v1.5h-2zM8 11.5h2v1.5h-2zM11 11.5h2v1.5h-2zM14 11.5h2v1.5h-2zM5 14.0h2v1.5h-2zM8 14.0h2v1.5h-2zM11 14.0h2v1.5h-2zM14 14.0h2v1.5h-2z" fill="#fff"/><path d="M1 1.500l7 8M8 1.500l-7 8" stroke="#0b6a6a" stroke-width="2.400"/><path d="M9.500 4h4.500v2M12.500 5l1.500 2 1.500-2" fill="none" stroke="#e00000" stroke-width="1.200"/></svg>
<svg style="left:310.5px;top:136.5px;" width="17" height="17" viewBox="0 0 16 16"><rect x="3" y="8" width="13" height="8.5" fill="#9a9cb0"/><path d="M4 9.0h2v1.5h-2zM7 9.0h2v1.5h-2zM10 9.0h2v1.5h-2zM13 9.0h2v1.5h-2zM4 11.5h2v1.5h-2zM7 11.5h2v1.5h-2zM10 11.5h2v1.5h-2zM13 11.5h2v1.5h-2zM4 14.0h2v1.5h-2zM7 14.0h2v1.5h-2zM10 14.0h2v1.5h-2zM13 14.0h2v1.5h-2z" fill="#eeeef6"/><path d="M3 5a3.500 3.500 0 0 1 6-2M9 .500v2.500h-2.500M9 5.500a3.500 3.500 0 0 1-5 1" fill="none" stroke="#8b8da3" stroke-width="1.400"/><path d="M12 3v3M10.500 5l1.500 2 1.500-2" fill="none" stroke="#8b8da3"/></svg>
<svg style="left:332.5px;top:136.5px;" width="17" height="17" viewBox="0 0 16 16"><rect x="0" y="1" width="10" height="6.0" fill="#9a9cb0"/><path d="M1 2.0h2v1.5h-2zM4 2.0h2v1.5h-2zM7 2.0h2v1.5h-2zM1 4.5h2v1.5h-2zM4 4.5h2v1.5h-2zM7 4.5h2v1.5h-2z" fill="#eeeef6"/><rect x="6" y="8" width="10" height="8.5" fill="#9a9cb0"/><path d="M7 9.0h2v1.5h-2zM10 9.0h2v1.5h-2zM13 9.0h2v1.5h-2zM7 11.5h2v1.5h-2zM10 11.5h2v1.5h-2zM13 11.5h2v1.5h-2zM7 14.0h2v1.5h-2zM10 14.0h2v1.5h-2zM13 14.0h2v1.5h-2z" fill="#eeeef6"/><path d="M10.500 3h3v3M12 4.500l1.500 2 1.500-2" fill="none" stroke="#8b8da3"/></svg>
<svg style="left:361.5px;top:136.5px;" width="17" height="17" viewBox="0 0 16 16"><path d="M1.500 1.500h6v8h-6zM3.500 3.500h6v8h-6z" fill="#fff" stroke="#000"/><rect x="6" y="7" width="10" height="8.5" fill="#000"/><path d="M7 8.0h2v1.5h-2zM10 8.0h2v1.5h-2zM13 8.0h2v1.5h-2zM7 10.5h2v1.5h-2zM10 10.5h2v1.5h-2zM13 10.5h2v1.5h-2zM7 13.0h2v1.5h-2zM10 13.0h2v1.5h-2zM13 13.0h2v1.5h-2z" fill="#fff"/><path d="M10 2.500h4v3M12.500 4l1.500 2 1.500-2" fill="none" stroke="#e00000" stroke-width="1.200"/></svg>
<svg style="left:391.5px;top:136.5px;" width="17" height="17" viewBox="0 0 16 16"><rect x="1" y="4" width="9" height="7" fill="#0a8a2a"/><path d="M7 0v3.500M5.500 2.500l1.500 2 1.500-2" fill="none" stroke="#e00000" stroke-width="1.300"/><path d="M4.500 1.500h5" stroke="#e00000"/><rect x="7" y="10.500" width="3" height="4" fill="#000"/><path d="M10 9.500h5.500v4h-5.500" fill="#fff" stroke="#000" stroke-width="1.300"/></svg>
<svg style="left:413.5px;top:136.5px;" width="17" height="17" viewBox="0 0 16 16"><path d="M2.500 2.500h10.500v3" fill="none" stroke="#9a9cb0"/><rect x="11.500" y="2.500" width="3.500" height="3" fill="#9a9cb0"/><path d="M4 5.500h5l2.500 4-2.500 5h-5l-2.500-5z" fill="#9a9cb0" stroke="#7d7f95"/><path d="M6.500 10l-3-3M6.500 10l3-3M6.500 10v4" stroke="#7d7f95"/></svg>
<svg style="left:435.5px;top:136.5px;" width="17" height="17" viewBox="0 0 16 16"><path d="M2.500 2.500h10.500v3" fill="none" stroke="#9a9cb0"/><rect x="11.500" y="2.500" width="3.500" height="3" fill="#9a9cb0"/><path d="M1.500 5h4.500v7h-4.500zM4.500 7h4.500v7h-4.500z" fill="#f2f2f8" stroke="#7d7f95"/><path d="M7.500 9h3l2 2v4.500h-5z" fill="#f2f2f8" stroke="#7d7f95"/></svg>
<svg style="left:483.5px;top:136.5px;" width="17" height="17" viewBox="0 0 16 16"><path d="M5 1l4 9M11 1l-4 9" stroke="#a9abbd" stroke-width="1.400"/><circle cx="5" cy="12.500" r="2" fill="none" stroke="#a9abbd" stroke-width="1.400"/><circle cx="11" cy="12.500" r="2" fill="none" stroke="#a9abbd" stroke-width="1.400"/></svg>
<svg style="left:505.5px;top:136.5px;" width="17" height="17" viewBox="0 0 16 16"><path d="M1.500 1.500h5l2 2v7h-7z" fill="#f2f2f8" stroke="#a9abbd"/><path d="M7.500 5.500h5l2 2v7h-7z" fill="#f2f2f8" stroke="#a9abbd"/><path d="M3 5h3M3 7h3M9 9h3M9 11h3" stroke="#c0c2d0"/></svg>
<svg style="left:527.5px;top:136.5px;" width="17" height="17" viewBox="0 0 16 16"><rect x="1.500" y="2.500" width="10" height="12" fill="#d9c58a" stroke="#a9abbd"/><rect x="4" y="1" width="5" height="3" fill="#a9abbd"/><path d="M6.500 6.500h6l2 2v7h-8z" fill="#f2f2f8" stroke="#a9abbd"/></svg>
<svg style="left:858.5px;top:136.5px;" width="17" height="17" viewBox="0 0 16 16"><text x="8" y="13" font-size="16" font-weight="bold" font-style="normal" text-anchor="middle" font-family="Liberation Serif,serif" fill="#6d6f86" >B</text></svg>
<svg style="left:879.5px;top:136.5px;" width="17" height="17" viewBox="0 0 16 16"><text x="8" y="13" font-size="16" font-weight="bold" font-style="italic" text-anchor="middle" font-family="Liberation Serif,serif" fill="#6d6f86" >I</text></svg>
<svg style="left:901.5px;top:136.5px;" width="17" height="17" viewBox="0 0 16 16"><text x="8" y="12" font-size="15" font-weight="normal" font-style="normal" text-anchor="middle" font-family="Liberation Serif,serif" fill="#6d6f86" >U</text><path d="M2.500 14.500h11" stroke="#6d6f86"/></svg>
<svg style="left:923.5px;top:136.5px;" width="17" height="17" viewBox="0 0 16 16"><text x="5" y="13" font-size="13" font-weight="bold" font-style="normal" text-anchor="middle" font-family="Liberation Serif,serif" fill="#6d6f86" >x</text><text x="12.5" y="7" font-size="8.5" font-weight="normal" font-style="normal" text-anchor="middle" font-family="Liberation Serif,serif" fill="#9a9cb0" >2</text></svg>
<svg style="left:945.5px;top:136.5px;" width="17" height="17" viewBox="0 0 16 16"><text x="5" y="11" font-size="13" font-weight="bold" font-style="normal" text-anchor="middle" font-family="Liberation Serif,serif" fill="#6d6f86" >x</text><text x="12.5" y="15.5" font-size="8.5" font-weight="normal" font-style="normal" text-anchor="middle" font-family="Liberation Serif,serif" fill="#9a9cb0" >2</text></svg>
<svg style="left:967.5px;top:136.5px;" width="17" height="17" viewBox="0 0 16 16"><text x="5" y="12" font-size="13" font-weight="bold" font-style="normal" text-anchor="middle" font-family="Liberation Serif,serif" fill="#6d6f86" >x</text><text x="12.5" y="6.5" font-size="8" font-weight="normal" font-style="normal" text-anchor="middle" font-family="Liberation Serif,serif" fill="#9a9cb0" >2</text><text x="12.5" y="15.5" font-size="8" font-weight="normal" font-style="normal" text-anchor="middle" font-family="Liberation Serif,serif" fill="#9a9cb0" >1</text></svg>
<svg style="left:987.5px;top:136.5px;" width="17" height="17" viewBox="0 0 16 16"><text x="8" y="13" font-size="14.5" font-weight="bold" font-style="normal" text-anchor="middle" font-family="Liberation Serif,serif" fill="#6d6f86" >αβ</text></svg>
<svg style="left:1010.5px;top:136.5px;" width="17" height="17" viewBox="0 0 16 16"><text x="7.5" y="15" font-size="21" font-weight="normal" font-style="normal" text-anchor="middle" font-family="Liberation Serif,serif" fill="#6d6f86" >A</text><path d="M12 4.500l2-2.500 2 2.500z" fill="#6d6f86"/></svg>
<svg style="left:1032.5px;top:136.5px;" width="17" height="17" viewBox="0 0 16 16"><text x="7" y="14" font-size="14" font-weight="normal" font-style="normal" text-anchor="middle" font-family="Liberation Serif,serif" fill="#6d6f86" >A</text><path d="M11.500 2l2 2.500 2-2.500z" fill="#6d6f86"/></svg>
<svg style="left:1054.5px;top:136.5px;" width="17" height="17" viewBox="0 0 16 16"><path d="M1 2.500h13M1 5.500h10M1 8.500h13M1 11.500h10M1 14.500h13" stroke="#6d6f86" stroke-width="1.200"/></svg>
<div class="sep" style="left:81px;top:135px;width:1px;height:20px;"></div>
<div class="sep" style="left:133px;top:135px;width:1px;height:20px;"></div>
<div class="sep" style="left:185px;top:135px;width:1px;height:20px;"></div>
<div class="sep" style="left:282px;top:135px;width:1px;height:20px;"></div>
<div class="sep" style="left:356px;top:135px;width:1px;height:20px;"></div>
<div class="sep" style="left:385px;top:135px;width:1px;height:20px;"></div>
<svg style="left:1074px;top:145px;" width="7" height="4" viewBox="0 0 7 4"><path d="M0 0h7l-3.500 3.500z" fill="#000"/></svg>
<svg style="left:1094px;top:134px;" width="7" height="5" viewBox="0 0 7 5"><path d="M0 0l2.500 2.500-2.500 2.500zM3.500 0l2.500 2.500-2.500 2.500z" fill="#000"/></svg>
<svg style="left:1135px;top:134px;" width="7" height="5" viewBox="0 0 7 5"><path d="M0 0l2.500 2.500-2.500 2.500zM3.500 0l2.500 2.500-2.500 2.500z" fill="#000"/></svg>
<div style="left:614px;top:134px;width:159px;height:25px;background:#f2f2f6;border:1px solid #c8c9d8"></div>
<div style="left:778px;top:134px;width:73px;height:25px;background:#f2f2f6;border:1px solid #c8c9d8"></div>
<svg style="left:760px;top:145px;" width="7" height="4" viewBox="0 0 7 4"><path d="M0 0h7l-3.500 3.500z" fill="#777"/></svg>
<svg style="left:839px;top:145px;" width="7" height="4" viewBox="0 0 7 4"><path d="M0 0h7l-3.500 3.500z" fill="#777"/></svg>
<span class="t" style="left:622px;top:136px;font-size:20px;font-family:'Liberation Serif',serif;font-weight:bold;color:#333">T</span>
<span class="t" style="left:642px;top:138px;font-size:17.5px;color:#9a9a9a;letter-spacing:-.2px">默认: 宋体</span>
<span class="t" style="left:781px;top:138px;font-size:17px;color:#9a9a9a">0</span>
<svg style="left:560px;top:139px;" width="14" height="14" viewBox="0 0 14 14"><path d="M2 9c2-5 8-5 10-1" fill="none" stroke="#b9bbd0" stroke-width="2"/></svg>
<span class="t" style="left:517px;top:128px;font-size:22px;color:#e8141c;font-weight:900;letter-spacing:3.900px">我 爱 分 享 网</span>
<span class="t" style="left:517px;top:160px;font-size:17px;color:#e8141c;font-weight:bold;letter-spacing:.55px;font-family:'Liberation Serif',serif">www.zhanshaoyi.com</span>
<span class="t" style="left:21px;top:167px;font-size:17px;color:#8c8c8c;transform:rotate(90deg);transform-origin:0 0">项目管理器<i style="font-style:normal;letter-spacing:3px;margin-left:7px">(1)</i></span>
<span class="t" style="left:21px;top:331px;font-size:17px;color:#8c8c8c;transform:rotate(90deg);transform-origin:0 0">消息日志</span>
<span class="t" style="left:21px;top:441px;font-size:17px;color:#8c8c8c;transform:rotate(90deg);transform-origin:0 0">提示日志</span>
<div class="griph" style="left:33px;top:166px;width:22px;height:3px;"></div>
<div style="left:29px;top:171px;width:23px;height:23px;background:#d5e6f7;border:1px solid #2f86dd"></div>
<svg style="left:32px;top:174px;" width="16" height="16" viewBox="0 0 16 16"><path d="M3 .5v14l3.300-3.200 2.400 5 2.300-1.100-2.400-4.900h4.600z" fill="#fff" stroke="#000" stroke-width="1.100" stroke-linejoin="round"/></svg>
<svg style="left:32px;top:197px;" width="16" height="16" viewBox="0 0 16 16"><circle cx="6" cy="5.500" r="4" fill="none" stroke="#666" stroke-width="1.200"/><path d="M4 5.500h4M6 3.500v4" stroke="#666"/><path d="M9 8.500l5 5" stroke="#666" stroke-width="1.800"/><path d="M1.500 11.500v3h8v-3" fill="none" stroke="#666"/></svg>
<svg style="left:32px;top:220px;" width="16" height="16" viewBox="0 0 16 16"><circle cx="6" cy="5.500" r="4" fill="none" stroke="#666" stroke-width="1.200"/><path d="M4 5.500h4" stroke="#666"/><path d="M9 8.500l5 5" stroke="#666" stroke-width="1.800"/><path d="M1.500 11.500v3h8v-3M4 13v1.500M6.500 13v1.500" fill="none" stroke="#666"/></svg>
<svg style="left:32px;top:243px;" width="16" height="16" viewBox="0 0 16 16"><path d="M8 2v12M2 8h12" stroke="#555" stroke-width="1"/><rect x="5.500" y="5.500" width="5" height="5" fill="none" stroke="#555" stroke-width=".8"/></svg>
<svg style="left:32px;top:266px;" width="16" height="16" viewBox="0 0 16 16"><circle cx="8" cy="8" r="5" fill="none" stroke="#000" stroke-width="1.200"/><circle cx="8" cy="8" r="1.500" fill="none" stroke="#000"/><path d="M8 0v4M8 12v4M0 8h4M12 8h4" stroke="#000" stroke-width="1.200"/></svg>
<svg style="left:51px;top:272px;" width="6" height="3" viewBox="0 0 7 3.500"><path d="M0 0h7l-3.500 3.500z" fill="#000"/></svg>
<svg style="left:32px;top:289px;" width="16" height="16" viewBox="0 0 16 16"><path d="M8 1v5M5.500 4l2.500 3 2.500-3zM8 15v-5M5.500 12l2.500-3 2.500 3z" stroke="#555" fill="#555" stroke-width="1"/></svg>
<svg style="left:32px;top:312px;" width="16" height="16" viewBox="0 0 16 16"><ellipse cx="9" cy="11" rx="6.500" ry="3.500" fill="#9a9a9a" stroke="#777"/><path d="M4 0v5M1.500 3.500l2.500 3 2.500-3z" stroke="#444" fill="#444"/></svg>
<svg style="left:51px;top:318px;" width="6" height="3" viewBox="0 0 7 3.500"><path d="M0 0h7l-3.500 3.500z" fill="#000"/></svg>
<svg style="left:32px;top:335px;" width="16" height="16" viewBox="0 0 16 16"><path d="M4 0v5M1.500 3.500l2.500 3 2.500-3z" stroke="#000" fill="#000"/><path d="M1 14l14-7" stroke="#1a2fd0" stroke-width="1.200"/><path d="M7 9h7v6h-7z" fill="none" stroke="#000" stroke-dasharray="2 1.200"/><circle cx="10.500" cy="11.500" r="1" fill="#000"/></svg>
<svg style="left:51px;top:341px;" width="6" height="3" viewBox="0 0 7 3.500"><path d="M0 0h7l-3.500 3.500z" fill="#000"/></svg>
<svg style="left:32px;top:358px;" width="16" height="16" viewBox="0 0 16 16"><circle cx="8" cy="4" r="1.100" fill="#888"/><circle cx="4" cy="8" r="1.100" fill="#888"/><circle cx="12" cy="8" r="1.100" fill="#888"/><circle cx="8" cy="12.500" r="1.100" fill="#888"/><circle cx="5" cy="12" r=".8" fill="#aaa"/></svg>
<svg style="left:32px;top:381px;" width="16" height="16" viewBox="0 0 16 16"><text x="8" y="15" font-size="20" font-weight="bold" text-anchor="middle" font-family="Liberation Serif,serif">T</text></svg>
<svg style="left:32px;top:404px;" width="16" height="16" viewBox="0 0 16 16"><rect x="1.500" y="4.500" width="10" height="10" fill="#fff" stroke="#000" stroke-width="1.200"/><path d="M6.500 4.500v10M1.500 9.500h10" stroke="#000" stroke-width="1.200"/><path d="M3 6h2v2h-2zM8 11h2v2h-2z" fill="#000"/><text x="11" y="6" font-size="8" font-weight="bold" fill="#e00000" font-family="Liberation Sans,sans-serif">a</text></svg>
<svg style="left:51px;top:410px;" width="6" height="3" viewBox="0 0 7 3.500"><path d="M0 0h7l-3.500 3.500z" fill="#000"/></svg>
<svg style="left:32px;top:426px;" width="16" height="16" viewBox="0 0 16 16"><path d="M2 14l10-10" stroke="#000" stroke-width="2"/><path d="M6.500 2.500h7v7z" fill="#000"/></svg>
<svg style="left:51px;top:432px;" width="6" height="3" viewBox="0 0 7 3.500"><path d="M0 0h7l-3.500 3.500z" fill="#000"/></svg>
<svg style="left:32px;top:449px;" width="16" height="16" viewBox="0 0 16 16"><path d="M2 14.500l12-12" stroke="#000" stroke-width="1.500"/></svg>
<svg style="left:51px;top:455px;" width="6" height="3" viewBox="0 0 7 3.500"><path d="M0 0h7l-3.500 3.500z" fill="#000"/></svg>
<svg style="left:32px;top:472px;" width="16" height="16" viewBox="0 0 16 16"><rect x="2.500" y="4.500" width="11" height="8" fill="#9a9a9a" stroke="#333"/></svg>
<svg style="left:51px;top:478px;" width="6" height="3" viewBox="0 0 7 3.500"><path d="M0 0h7l-3.500 3.500z" fill="#000"/></svg>
<svg style="left:32px;top:495px;" width="16" height="16" viewBox="0 0 16 16"><path d="M2.500 15v-5h11v5" fill="none" stroke="#555"/><path d="M8 10v-3" stroke="#555"/><text x="8" y="8" font-size="10" text-anchor="middle" fill="#333" font-family="Liberation Sans,sans-serif">*</text></svg>
<svg style="left:51px;top:501px;" width="6" height="3" viewBox="0 0 7 3.500"><path d="M0 0h7l-3.500 3.500z" fill="#000"/></svg>
<svg style="left:32px;top:518px;" width="16" height="16" viewBox="0 0 16 16"><path d="M4.500 8v-3.500a1 1 0 0 1 2 0v-1.500a1 1 0 0 1 2 0v1a1 1 0 0 1 2 0v1.500a1 1 0 0 1 2 0v5c0 3-1.500 4.500-4 4.500s-3.500-1-5-3.500l-1.500-2.500c.800-1 1.800-.500 2.500.500z" fill="#fff" stroke="#000" stroke-width="1"/><path d="M6.500 4.500v4M8.500 4v4.500M10.500 5.500v3" stroke="#000" stroke-width=".8"/></svg>
<svg style="left:32px;top:541px;" width="16" height="16" viewBox="0 0 16 16"><text x="0" y="14" font-size="15" font-weight="bold" fill="#1a2fd0" font-family="Liberation Sans,sans-serif">√a</text><path d="M5.500 1.500h10" stroke="#1a2fd0" stroke-width="1.600"/></svg>
<svg style="left:51px;top:547px;" width="6" height="3" viewBox="0 0 7 3.500"><path d="M0 0h7l-3.500 3.500z" fill="#000"/></svg>
<svg style="left:32px;top:564px;" width="16" height="16" viewBox="0 0 16 16"><rect x="1.500" y=".5" width="13" height="15" fill="#fff" stroke="#000" stroke-width="1.200"/><path d="M4 5v7h8" fill="none" stroke="#000"/><path d="M4.500 10l3-3 2 1.500 3-3.500" fill="none" stroke="#e00000" stroke-width="1.200"/></svg>
<svg style="left:51px;top:570px;" width="6" height="3" viewBox="0 0 7 3.500"><path d="M0 0h7l-3.500 3.500z" fill="#000"/></svg>
<svg style="left:32px;top:587px;" width="16" height="16" viewBox="0 0 16 16"><g transform="scale(.75) translate(2,0)"><path d="M4.500 8v-3.500a1 1 0 0 1 2 0v-1.500a1 1 0 0 1 2 0v1a1 1 0 0 1 2 0v1.500a1 1 0 0 1 2 0v5c0 3-1.500 4.500-4 4.500s-3.500-1-5-3.500l-1.500-2.500c.800-1 1.800-.500 2.500.500z" fill="#fff" stroke="#000" stroke-width="1.300"/></g><path d="M1 13.500h14M3 11.500v4M6 11.500v4M9 11.500v4M12 11.500v4" stroke="#000"/></svg>
<svg style="left:32px;top:610px;" width="16" height="16" viewBox="0 0 16 16"><path d="M4.500 4.500l3-3h7v9l-3 3z" fill="#a00000" stroke="#700"/><rect x="4.500" y="4.500" width="7" height="9" fill="#ff1a1a" stroke="#900"/><path d="M0 9h7" stroke="#1a2fd0" stroke-width="2.400"/><path d="M5.500 5.500l4.500 3.500-4.500 3.500z" fill="#1a2fd0"/></svg>
<svg style="left:52px;top:634px;" width="7" height="6" viewBox="0 0 7 6"><path d="M3 0l3.500 3-3.500 3z" fill="#000"/><path d="M1 0v6" stroke="#000" stroke-width="1.200"/></svg>
<div class="griph" style="left:32px;top:649px;width:16px;height:3px;"></div>
<svg style="left:32px;top:656px;" width="16" height="16" viewBox="0 0 16 16"><path d="M0 2h16" stroke="#e00000" stroke-width="2.500"/><path d="M0 6h16" stroke="#f5d800" stroke-width="2.500"/><path d="M0 10h16" stroke="#1a2fd0" stroke-width="2.500"/><path d="M0 14h16" stroke="#0a8a2a" stroke-width="2.500"/></svg>
<svg style="left:32px;top:680px;" width="16" height="16" viewBox="0 0 16 16"><circle cx="8" cy="8" r="7" fill="none" stroke="#777"/><circle cx="8" cy="9.500" r="4" fill="none" stroke="#777"/><circle cx="8" cy="11.500" r="1.800" fill="none" stroke="#777"/></svg>
<svg style="left:32px;top:703px;" width="16" height="16" viewBox="0 0 16 16"><path d="M8 0v16" stroke="#777"/><rect x="4.500" y="2.500" width="7" height="4" fill="#f2f2f8" stroke="#777"/><rect x="1.500" y="9.500" width="13" height="4" fill="#f2f2f8" stroke="#777"/></svg>
<svg style="left:32px;top:726px;" width="16" height="16" viewBox="0 0 16 16"><rect x="1.500" y=".5" width="13" height="15" fill="#fff" stroke="#000"/><path d="M3 4.500h5" stroke="#000"/><text x="9" y="7" font-size="6.500" font-weight="bold" font-family="Liberation Sans,sans-serif">B</text><path d="M3 11.500h4" stroke="#1a2fd0" stroke-width="1.400"/><path d="M5 9.500l2.500 2-2.500 2z" fill="#1a2fd0"/><text x="9" y="14" font-size="6.500" font-weight="bold" font-family="Liberation Sans,sans-serif">C</text></svg>
<svg style="left:33px;top:766px;" width="5" height="6" viewBox="0 -1 5 7"><path d="M0 1.500h5l-2.500-2zM0 3.500h5l-2.500 2z" fill="#000"/></svg>
<svg style="left:42px;top:766px;" width="7" height="6" viewBox="0 0 7 6"><path d="M3 0l3.500 3-3.500 3z" fill="#000"/><path d="M1 0v6" stroke="#000" stroke-width="1.200"/></svg>
<div class="tbv" style="left:27px;top:777px;width:24px;height:36px;border-radius:4px"></div>
<div class="griph" style="left:32px;top:780px;width:16px;height:3px;"></div>
<svg style="left:33px;top:805px;" width="5" height="6" viewBox="0 -1 5 7"><path d="M0 1.500h5l-2.500-2zM0 3.500h5l-2.500 2z" fill="#000"/></svg>
<svg style="left:42px;top:805px;" width="7" height="6" viewBox="0 0 7 6"><path d="M3 0l3.500 3-3.500 3z" fill="#000"/><path d="M1 0v6" stroke="#000" stroke-width="1.200"/></svg>
<svg style="left:3px;top:799px;" width="42" height="43" viewBox="0 0 42 43"><rect x="1.500" y="4.500" width="30" height="32" rx="3" fill="#dbe8f8" stroke="#5a8fd8" stroke-width="1.500"/><rect x="10" y="1" width="13" height="6" rx="2" fill="#5a8fd8"/><circle cx="17" cy="21" r="8.500" fill="#fff" stroke="#e2483d" stroke-width="2"/><path d="M17 16v5.500l4 2.500" fill="none" stroke="#e2483d" stroke-width="2"/><path d="M7.500 16l1.500 3 3-1.500" fill="none" stroke="#e2483d" stroke-width="1.500"/><circle cx="32" cy="35" r="7" fill="#1f6fe0"/><circle cx="31" cy="34" r="2.800" fill="none" stroke="#fff" stroke-width="1.500"/><path d="M33 36l3 3" stroke="#fff" stroke-width="1.800"/></svg>
<div class="griph" style="left:915px;top:166px;width:16px;height:3px;"></div>
<div style="left:912px;top:171px;width:23px;height:23px;background:#d5e6f7;border:1px solid #2f86dd"></div>
<div style="left:912px;top:286px;width:23px;height:23px;background:#d5e6f7;border:1px solid #2f86dd"></div>
<svg style="left:915px;top:174px;" width="16" height="16" viewBox="0 0 16 16"><path d="M9 2h6v2.500h-6zM5 5.500h6v2.500h-6zM2 9h6v2.500h-6zM1 12.500h4v2.500h-4z" fill="#777"/><path d="M5 2h4v2.500h-4zM11 5.500h3v2.500h-3zM8 9h4v2.500h-4zM5 12.500h3v2.500h-3z" fill="#c8c8d0"/></svg>
<svg style="left:915px;top:197px;" width="16" height="16" viewBox="0 0 16 16"><path d="M3.500 13.500v-12M1.500 4l2-3.500 2 3.500zM3.500 13.500h11M12 11.500l3.500 2-3.500 2zM3.500 13.500l8-8M8.500 4.500l4-.500-.500 4z" stroke="#e00000" fill="#e00000" stroke-width="1.200"/></svg>
<svg style="left:915px;top:220px;" width="16" height="16" viewBox="0 0 16 16"><path d="M3.500 13.500v-12M3.500 13.500l9-9" stroke="#000" stroke-width="1.200" fill="none"/><path d="M3.500 13.500h11M12 11.500l3.500 2-3.500 2z" stroke="#e00000" fill="#e00000" stroke-width="1.200"/></svg>
<svg style="left:915px;top:243px;" width="16" height="16" viewBox="0 0 16 16"><path d="M3.500 13.500h12M3.500 13.500l9-9" stroke="#000" stroke-width="1.200" fill="none"/><path d="M3.500 13.500v-12M1.500 4l2-3.500 2 3.500z" stroke="#e00000" fill="#e00000" stroke-width="1.200"/></svg>
<svg style="left:915px;top:266px;" width="16" height="16" viewBox="0 0 16 16"><text x="8" y="12" font-size="9" text-anchor="middle" fill="#666" font-family="Liberation Sans,sans-serif">XY</text><path d="M3 4a6 4 0 0 1 10 0M13 1v3h-3M13 12.500a6 4 0 0 1-10 0M3 15.500v-3h3" fill="none" stroke="#777" stroke-width="1.200"/></svg>
<svg style="left:915px;top:289px;" width="16" height="16" viewBox="0 0 16 16"><path d="M1.500 0v14.500h14" fill="none" stroke="#000" stroke-width="1.400"/><circle cx="10.500" cy="3" r="1.600" fill="#000"/><path d="M9.500 5l-3 1.500-1.500 2.500M9.500 5l-1.500 4 2.500 1.500-1 3M8 9l-2.500 1.500-2 .500M9.500 6l2 1.500 2-1" fill="none" stroke="#000" stroke-width="1.600"/></svg>
<svg style="left:915px;top:319px;" width="16" height="16" viewBox="0 0 16 16"><rect x="1.500" y="1.500" width="13" height="13" fill="#fff" stroke="#000" stroke-width="1.200"/><path d="M1.500 8.500h13M4 11v2h3M9 11v2h3" fill="none" stroke="#000"/></svg>
<svg style="left:915px;top:342px;" width="16" height="16" viewBox="0 0 16 16"><path d="M1.500 1.500h5.500v4h-5.500zM9 1.500h5.500v4h-5.500zM1.500 6.500h5.500v4h-5.500zM9 6.500h5.500v4h-5.500zM1.500 11.500h5.500v4h-5.500zM9 11.500h5.500v4h-5.500z" fill="#fff" stroke="#333"/><path d="M3 3.500h2M10.500 3.500h2M3 8.500h2M10.500 8.500h2M3 13.500h2M10.500 13.500h2" stroke="#333"/></svg>
<svg style="left:915px;top:365px;" width="16" height="16" viewBox="0 0 16 16"><path d="M1.500 1.500h5.500v5h-5.500zM9 1.500h5.500v5h-5.500zM1.500 9.500h13v5h-13z" fill="#fff" stroke="#333"/><path d="M3 4.500h2M10.500 4.500h2M3 12.500h4M9 12.500h4" stroke="#333"/></svg>
<svg style="left:915px;top:388px;" width="16" height="16" viewBox="0 0 16 16"><rect x="1.500" y="1.500" width="13" height="5" fill="#fff" stroke="#1a2fd0"/><path d="M2.500 4.500c1.500-2.500 3-2.500 4.500 0s3 2.500 4.500 0 1.500-1 2-1.500" fill="none" stroke="#e00000" stroke-width="1.200"/><rect x="1.500" y="9.500" width="10" height="5" fill="#fff" stroke="#333"/><rect x="4.500" y="8" width="10" height="5" fill="#fff" stroke="#333"/><path d="M6 10l2 2 2-2" fill="none" stroke="#333"/></svg>
<svg style="left:915px;top:419px;" width="16" height="16" viewBox="0 0 16 16"><path d="M2.500 2v12.500h12" fill="none" stroke="#000" stroke-width="1.200"/><path d="M2.500 4h1.500M2.500 7h1.500M2.500 10h1.500M6 14.500v-1.500M9 14.500v-1.500M12 14.500v-1.500" stroke="#000"/></svg>
<svg style="left:915px;top:442px;" width="16" height="16" viewBox="0 0 16 16"><path d="M2.500 2.500h12" stroke="#555" stroke-dasharray="1 1"/><path d="M2.500 2.500v12h12" fill="none" stroke="#777" stroke-dasharray="1 1"/><path d="M2.500 2.500v12" stroke="#555"/></svg>
<svg style="left:915px;top:465px;" width="16" height="16" viewBox="0 0 16 16"><path d="M2.500 14.500h12v-12" fill="none" stroke="#555"/><path d="M2.500 2.500v12" stroke="#777" stroke-dasharray="1 1"/></svg>
<svg style="left:915px;top:488px;" width="16" height="16" viewBox="0 0 16 16"><rect x="2.500" y="2.500" width="12" height="12" fill="none" stroke="#333" stroke-dasharray="1 1"/><path d="M2.500 2.500h12" stroke="#333"/></svg>
<svg style="left:915px;top:510px;" width="16" height="16" viewBox="0 0 16 16"><path d="M2.500 2.500v12h12" fill="none" stroke="#555" stroke-dasharray="1 1"/><path d="M8 7v4h4" fill="none" stroke="#000" stroke-width="1.400"/></svg>
<svg style="left:915px;top:533px;" width="16" height="16" viewBox="0 0 16 16"><path d="M2.500 2.500v12h12" fill="none" stroke="#555" stroke-dasharray="1 1"/><path d="M8 7v4h4" fill="none" stroke="#000" stroke-width="1.400"/><path d="M10 6l2-2" stroke="#e00000" stroke-width="1.400"/></svg>
<div class="seph" style="left:914px;top:314px;width:18px;height:1px;"></div>
<div class="seph" style="left:914px;top:412px;width:18px;height:1px;"></div>
<svg style="left:925px;top:558px;" width="7" height="6" viewBox="0 0 7 6"><path d="M3 0l3.500 3-3.500 3z" fill="#000"/><path d="M1 0v6" stroke="#000" stroke-width="1.200"/></svg>
<div class="griph" style="left:915px;top:573px;width:16px;height:3px;"></div>
<svg style="left:915px;top:580px;" width="16" height="16" viewBox="0 0 16 16"><path d="M1.500 1v14" stroke="#777" stroke-dasharray="1 1"/><rect x="4.500" y="2.500" width="7" height="4" fill="#f4f4fa" stroke="#777"/><rect x="4.500" y="9.500" width="10" height="4" fill="#f4f4fa" stroke="#777"/></svg>
<svg style="left:915px;top:603px;" width="16" height="16" viewBox="0 0 16 16"><path d="M14.500 1v14" stroke="#777" stroke-dasharray="1 1"/><rect x="5.500" y="2.500" width="7" height="4" fill="#f4f4fa" stroke="#777"/><rect x="2.500" y="9.500" width="10" height="4" fill="#f4f4fa" stroke="#777"/></svg>
<svg style="left:915px;top:634px;" width="16" height="16" viewBox="0 0 16 16"><path d="M1 1.500h14" stroke="#777" stroke-dasharray="1 1"/><rect x="2.500" y="4.500" width="4" height="10" fill="#f4f4fa" stroke="#777"/><rect x="9.500" y="4.500" width="4" height="6" fill="#f4f4fa" stroke="#777"/></svg>
<svg style="left:915px;top:657px;" width="16" height="16" viewBox="0 0 16 16"><path d="M1 14.500h14" stroke="#777" stroke-dasharray="1 1"/><rect x="2.500" y="1.500" width="4" height="10" fill="#f4f4fa" stroke="#777"/><rect x="9.500" y="5.500" width="4" height="6" fill="#f4f4fa" stroke="#777"/></svg>
<svg style="left:915px;top:689px;" width="16" height="16" viewBox="0 0 16 16"><path d="M8 0v16" stroke="#777"/><rect x="4.500" y="2.500" width="7" height="4" fill="#f4f4fa" stroke="#777"/><rect x="2.500" y="9.500" width="11" height="4" fill="#f4f4fa" stroke="#777"/></svg>
<svg style="left:915px;top:712px;" width="16" height="16" viewBox="0 0 16 16"><path d="M0 8h16" stroke="#777"/><rect x="2.500" y="4.500" width="4" height="7" fill="#f4f4fa" stroke="#777"/><rect x="9.500" y="2.500" width="4" height="11" fill="#f4f4fa" stroke="#777"/></svg>
<svg style="left:915px;top:743px;" width="16" height="16" viewBox="0 0 16 16"><path d="M1.500 1v14M14.500 1v14" stroke="#777" stroke-dasharray="1 1"/><rect x="4.500" y="2.500" width="7" height="4" fill="#f4f4fa" stroke="#777"/><rect x="4.500" y="9.500" width="7" height="4" fill="#f4f4fa" stroke="#777"/></svg>
<svg style="left:915px;top:766px;" width="16" height="16" viewBox="0 0 16 16"><path d="M1 1.500h14M1 14.500h14" stroke="#777" stroke-dasharray="1 1"/><rect x="2.500" y="4.500" width="4" height="7" fill="#f4f4fa" stroke="#777"/><rect x="9.500" y="4.500" width="4" height="7" fill="#f4f4fa" stroke="#777"/></svg>
<div class="seph" style="left:914px;top:626px;width:18px;height:1px;"></div>
<div class="seph" style="left:914px;top:682px;width:18px;height:1px;"></div>
<div class="seph" style="left:914px;top:737px;width:18px;height:1px;"></div>
<div class="seph" style="left:914px;top:790px;width:18px;height:1px;"></div>
<svg style="left:916px;top:806px;" width="5" height="6" viewBox="0 -1 5 7"><path d="M0 1.500h5l-2.500-2zM0 3.500h5l-2.500 2z" fill="#000"/></svg>
<svg style="left:934px;top:806px;" width="7" height="6" viewBox="0 0 7 6"><path d="M3 0l3.500 3-3.500 3z" fill="#000"/><path d="M1 0v6" stroke="#000" stroke-width="1.200"/></svg>
<div style="left:950px;top:161px;width:193px;height:31px;background:linear-gradient(#c9d8ea,#d6e2f0 50%,#dde7f3)"></div><span class="t" style="left:954px;top:169px;font-size:17px;">对象管理器</span><svg style="left:1094px;top:174px;" width="9" height="5" viewBox="0 0 9 5"><path d="M0 0h9l-4.500 5z" fill="#000"/></svg><svg style="left:1112px;top:170px;" width="8" height="12" viewBox="0 0 8 12"><path d="M1.500 1h5M2.500 1v5M5.500 1v5" stroke="#000" stroke-width="1.200" fill="none"/><path d="M5 1.500v4.500" stroke="#000" stroke-width="1.800"/><path d="M.5 6.500h7M4 6.500v4.500" stroke="#000" stroke-width="1.200"/></svg><svg style="left:1128px;top:172px;" width="8" height="8" viewBox="0 0 8 8"><path d="M.5 .5l7 7M7.500 .5l-7 7" stroke="#000" stroke-width="1.500"/></svg>
<svg style="left:1049px;top:167px;" width="18" height="18" viewBox="0 0 18 18"><path d="M1 0v16.500h17" fill="none" stroke="#000" stroke-width="1.300"/><path d="M3 4l4.500 6 3.500-4 5 4" fill="none" stroke="#e00000" stroke-width="1.400"/><path d="M4 11l4-5 4 5 4-3" fill="none" stroke="#000" stroke-width=".9"/></svg>
<svg style="left:1070px;top:167px;" width="18" height="18" viewBox="0 0 18 18"><path d="M1 1.500h15.500v11l-4 4h-1l-1.500-4h-9z" fill="#fff" stroke="#1f5fd6" stroke-width="1.600"/><path d="M8.500 3.500v8M4.500 7.500h8" stroke="#e00000" stroke-width="1.800"/></svg>
<div style="left:950px;top:192px;width:192px;height:89px;background:#fff;border:2px solid #6b6b6b;overflow:hidden"></div>
<div style="left:1120px;top:194px;width:20px;height:85px;background:#f0f0f0"></div>
<div style="left:1120px;top:223px;width:19px;height:28px;background:#c9c9c9"></div>
<svg style="left:1124px;top:202px;" width="11" height="7" viewBox="0 0 11 7"><path d="M.5 6l5-5 5 5" fill="none" stroke="#5a5a5a" stroke-width="2"/></svg>
<svg style="left:1124px;top:264px;" width="11" height="7" viewBox="0 0 11 7"><path d="M.5 1l5 5 5-5" fill="none" stroke="#5a5a5a" stroke-width="2"/></svg>
<svg style="left:958px;top:194px;" width="80" height="86" viewBox="0 0 80 86"><path d="M2.500 0v7.500h9M18.500 14v17.500h9M34.500 38v48M34.500 51.500h9M34.500 73.500h9" fill="none" stroke="#9a9a9a" stroke-dasharray="1 1.500"/></svg>
<div style="left:970px;top:195px;width:12px;height:12px;background:linear-gradient(#fff,#dcdce6);border:1px solid #9a9aa8;border-radius:2px"></div><div style="left:973px;top:200px;width:6px;height:2px;background:#2b3f9a"></div>
<div style="left:985px;top:193px;width:16px;height:16px;background:#fff;border:1px solid #333"></div><svg style="left:987px;top:196px;" width="12" height="10" viewBox="0 0 12 10"><path d="M1 5.500l3.500 3.500 6.500-8" fill="none" stroke="#444" stroke-width="1.600"/></svg>
<span class="t" style="left:1005px;top:195px;font-size:13.5px;">Layer1</span>
<div style="left:986px;top:217px;width:12px;height:12px;background:linear-gradient(#fff,#dcdce6);border:1px solid #9a9aa8;border-radius:2px"></div><div style="left:989px;top:222px;width:6px;height:2px;background:#2b3f9a"></div>
<div style="left:1001px;top:215px;width:16px;height:16px;background:#fff;border:1px solid #333"></div><svg style="left:1003px;top:218px;" width="12" height="10" viewBox="0 0 12 10"><path d="M1 5.500l3.500 3.500 6.500-8" fill="none" stroke="#444" stroke-width="1.600"/></svg>
<span class="t" style="left:1021px;top:217px;font-size:13.5px;">g1</span>
<div style="left:1017px;top:237px;width:16px;height:16px;background:#fff;border:1px solid #333"></div><svg style="left:1019px;top:240px;" width="12" height="10" viewBox="0 0 12 10"><path d="M1 5.500l3.500 3.500 6.500-8" fill="none" stroke="#444" stroke-width="1.600"/></svg>
<div style="left:1038px;top:238px;width:42px;height:15px;background:#ff0000;border:1px solid #7a7a7a"></div>
<div style="left:1084px;top:238px;width:36px;height:16px;overflow:hidden"><span class="t" style="left:0px;top:0px;font-size:14.5px;">2022年</span></div>
<div style="left:1017px;top:259px;width:16px;height:16px;background:#fff;border:1px solid #333"></div><svg style="left:1019px;top:262px;" width="12" height="10" viewBox="0 0 12 10"><path d="M1 5.500l3.500 3.500 6.500-8" fill="none" stroke="#444" stroke-width="1.600"/></svg>
<div style="left:1038px;top:260px;width:42px;height:15px;background:#00ff00;border:1px solid #7a7a7a"></div>
<div style="left:1084px;top:260px;width:36px;height:16px;overflow:hidden"><span class="t" style="left:0px;top:0px;font-size:14.5px;font-weight:bold">2023年</span></div>
<div style="left:950px;top:285px;width:193px;height:31px;background:linear-gradient(#c9d8ea,#d6e2f0 50%,#dde7f3)"></div><span class="t" style="left:954px;top:293px;font-size:15.5px;">Apps</span><svg style="left:1094px;top:298px;" width="9" height="5" viewBox="0 0 9 5"><path d="M0 0h9l-4.500 5z" fill="#000"/></svg><svg style="left:1112px;top:294px;" width="8" height="12" viewBox="0 0 8 12"><path d="M1.500 1h5M2.500 1v5M5.500 1v5" stroke="#000" stroke-width="1.200" fill="none"/><path d="M5 1.500v4.500" stroke="#000" stroke-width="1.800"/><path d="M.5 6.500h7M4 6.500v4.500" stroke="#000" stroke-width="1.200"/></svg><svg style="left:1128px;top:296px;" width="8" height="8" viewBox="0 0 8 8"><path d="M.5 .5l7 7M7.500 .5l-7 7" stroke="#000" stroke-width="1.500"/></svg>
<div style="left:950px;top:316px;width:32px;height:497px;background:#f0f0f0"></div>
<div style="left:981px;top:316px;width:138px;height:497px;background:#fff;border-left:1px solid #6a6a6a;border-top:1px solid #c8c8c8"></div>
<div style="left:1119px;top:316px;width:23px;height:497px;background:#f0f0f0;border-right:1px solid #7a7a7a"></div>
<div style="left:1120px;top:340px;width:19px;height:210px;background:#c1c1c1"></div>
<div style="left:1142px;top:316px;width:1px;height:497px;background:#e4e4e4"></div>
<svg style="left:1124px;top:325px;" width="11" height="7" viewBox="0 0 11 7"><path d="M.5 6l5-5 5 5" fill="none" stroke="#5a5a5a" stroke-width="2"/></svg>
<svg style="left:1124px;top:797px;" width="11" height="7" viewBox="0 0 11 7"><path d="M.5 1l5 5 5-5" fill="none" stroke="#5a5a5a" stroke-width="2"/></svg>
<svg style="left:962px;top:321px;" width="9" height="8" viewBox="0 0 9 8"><path d="M0 .5h9" stroke="#000" stroke-width="1.200"/><path d="M0 7l4.500-4.500 4.500 4.500z" fill="#000"/></svg>
<svg style="left:962px;top:338px;" width="9" height="6" viewBox="0 0 9 6"><path d="M0 5l4.500-4.500 4.500 4.500z" fill="#000"/></svg>
<svg style="left:962px;top:355px;" width="9" height="6" viewBox="0 0 9 6"><path d="M0 .5l4.500 4.500 4.500-4.500z" fill="#000"/></svg>
<svg style="left:962px;top:369px;" width="9" height="8" viewBox="0 0 9 8"><path d="M0 7.500h9" stroke="#000" stroke-width="1.200"/><path d="M0 .5l4.500 4.500 4.500-4.500z" fill="#000"/></svg>
<svg style="left:950px;top:378px;" width="34" height="170" viewBox="0 0 34 170"><path d="M31.500 5.500v155.500" stroke="#f0f0f0" stroke-width="1.600"/><path d="M31.500 117L17.500 110L7 117.500Q5 119 5 121.500V140Q5 142 7 143.200L31.500 161" fill="#f0f0f0" stroke="#555" stroke-linejoin="round"/><path d="M31.500 60.700L17.500 55L7 61.500Q5 63 5 65.500V96Q5 98 7 99.500L31.500 117" fill="#f0f0f0" stroke="#555" stroke-linejoin="round"/><path d="M31.500 5.500L7 18.800Q5 20 5 22.500V43.500Q5 46 7 47.200L31.500 60.700" fill="#f4f4f4" stroke="#555" stroke-linejoin="round"/></svg>
<span class="t" style="left:975px;top:396.500px;font-size:14.200px;font-weight:bold;transform:rotate(90deg);transform-origin:0 0">所有</span>
<span class="t" style="left:975px;top:439px;font-size:14.400px;transform:rotate(90deg);transform-origin:0 0">连接器</span>
<span class="t" style="left:975px;top:496px;font-size:15px;transform:rotate(90deg);transform-origin:0 0">统计</span>
<svg style="left:1008px;top:321px;" width="41" height="40" viewBox="0 0 41 40"><rect x=".5" y=".5" width="34" height="33" fill="#eef4fa" stroke="#3b9ad9"/><rect x=".5" y=".5" width="34" height="5" fill="#3b9ad9"/><rect x="3" y="8" width="12" height="16" fill="#c8ccd2"/><path d="M18 9h6M18 13h6M26 9h6M10 28h6M10 31h6" stroke="#b8c0c8" stroke-width="2"/><path d="M3 27h5M3 31h5M18 17h3" stroke="#c8ccd2" stroke-width="2"/><circle cx="29" cy="28" r="11" fill="#fff"/><circle cx="29" cy="28" r="9.500" fill="#3cb54a"/><path d="M29 22v12M23 28h12" stroke="#fff" stroke-width="3.200"/></svg>
<span class="t" style="left:998px;top:367.5px;font-size:16px;">添加App</span>
<svg style="left:1010px;top:417px;" width="39" height="38" viewBox="0 0 39 38"><rect width="39" height="38" fill="#fde7c3"/><path d="M3 19c2-1 3-4 4-7 1 3 2 3 3 0 1-6 2-9 3-9s2 5 3 9c1-3 2-3 3-1 1 2 2 2 3-2 1-3 2-3 3 1 1 3 2 5 3 5 2 0 3 2 5 4v4h-33z" fill="#e8343a"/><path d="M2 25h35" stroke="#e8343a" stroke-width="1.500"/><circle cx="21" cy="24" r="6.500" fill="#fde7c3" stroke="#2b2340" stroke-width="3"/><path d="M26 29l7 7" stroke="#2b2340" stroke-width="4" stroke-linecap="round"/></svg>
<span class="t" style="left:1004px;top:461.5px;font-size:16px;">Theme</span>
<span class="t" style="left:1000px;top:481.5px;font-size:16px;">Preview</span>
<svg style="left:1009px;top:510px;" width="40" height="39" viewBox="0 0 40 39"><path d="M21 21l18 17" stroke="#403a50" stroke-width="2.400" stroke-linecap="round"/><g transform="rotate(14 14 15)"><path d="M14 0l4 9.500 10 .500-7.500 6.500 2.500 10-9-5.500-8.500 6 2.500-10.500-8-6 10-1z" fill="#e6c33d"/><path d="M14 0l4 9.500 10 .500-7.500 6.500 2.500 10-9-5.500z" fill="#d9b02e" opacity=".55"/></g><path d="M28 4l.8 2 2 .8-2 .8-.8 2-.8-2-2-.8 2-.8zM4 27l.8 2 2 .8-2 .8-.8 2-.8-2-2-.8 2-.8zM31 13l.5 1.200 1.200.5-1.200.5-.5 1.200-.5-1.200-1.200-.5 1.200-.5z" fill="#e8c23a"/></svg>
<span class="t" style="left:1010px;top:555.5px;font-size:16px;">Stats</span>
<span class="t" style="left:1001px;top:575.5px;font-size:16.5px;">Advisor</span>
<svg style="left:1010px;top:604px;" width="39" height="39" viewBox="0 0 39 39"><rect width="39" height="39" fill="#2f4f8f"/><path d="M22 7h15l-1.500 5.500h-9l-1 4h8l-1.500 5h-8l-2.500 10h-6.500z" fill="#a9d6f7"/><path d="M16.500 7h5.500l-6.500 24.500h-5.500z" fill="#fff"/><path d="M9 9.500h8M6 13.500h10M4 17.500h11M2 21.500h12M1 25.500h11M3 29.500h8" stroke="#fff" stroke-width="2.400" stroke-linecap="round"/></svg>
<span class="t" style="left:990px;top:649.5px;font-size:16px;">Speedy Fit</span>
<svg style="left:1010px;top:698px;" width="39" height="39" viewBox="0 0 39 39"><rect x="1" y="1" width="38" height="37" fill="#a6c4ea"/><path d="M2.500 0v37.500h37" fill="none" stroke="#dfe9f7" stroke-width="2"/><path d="M8 34c12-1 24-6 28-30" fill="none" stroke="#f28fb5" stroke-width="2.400"/><circle cx="10" cy="34" r="1.800" fill="#fff"/><circle cx="18" cy="32" r="1.800" fill="#fff"/><circle cx="26" cy="26" r="1.800" fill="#fff"/><circle cx="32" cy="16" r="1.800" fill="#fff"/><circle cx="35.500" cy="6" r="1.800" fill="#fff"/></svg>
<span class="t" style="left:993px;top:743.5px;font-size:16px;color:#9a9a9a">Simple Fit</span>
<div style="left:1018px;top:795px;width:31px;height:18px;overflow:hidden"><svg style="left:0px;top:0px;" width="31" height="30" viewBox="0 0 31 30"><rect x="10" y="2" width="19" height="26" fill="#fff" stroke="#2b579a" stroke-width="1.500"/><path d="M14 7h12M14 12h12M14 17h12" stroke="#2b579a" stroke-width="2"/><path d="M0 3l17-3v30l-17-3z" fill="#2b579a"/><path d="M3 9l2 11 3-9 3 9 2-11" fill="none" stroke="#fff" stroke-width="1.800"/></svg></div>
<div class="tbh2" style="left:64px;top:782px;width:313px;height:30px;"></div><div class="chev" style="left:376px;top:782px;width:11px;height:30px;border-radius:0 4px 4px 0"></div><svg style="left:378px;top:803px;" width="7" height="7" viewBox="0 0 7 7"><path d="M0 0H6" stroke="#000" stroke-width="1"/><path d="M0 2.500H6L3 5.500Z" fill="#000"/></svg><div class="gripv" style="left:68px;top:787px;width:3px;height:19px;"></div>
<div class="tbh2" style="left:388px;top:782px;width:198px;height:30px;"></div><div class="chev" style="left:585px;top:782px;width:11px;height:30px;border-radius:0 4px 4px 0"></div><svg style="left:587px;top:803px;" width="7" height="7" viewBox="0 0 7 7"><path d="M0 0H6" stroke="#000" stroke-width="1"/><path d="M0 2.500H6L3 5.500Z" fill="#000"/></svg><div class="gripv" style="left:392px;top:787px;width:3px;height:19px;"></div>
<div class="tbh2" style="left:597px;top:782px;width:159px;height:30px;"></div><div class="chev" style="left:755px;top:782px;width:11px;height:30px;border-radius:0 4px 4px 0"></div><svg style="left:757px;top:803px;" width="7" height="7" viewBox="0 0 7 7"><path d="M0 0H6" stroke="#000" stroke-width="1"/><path d="M0 2.500H6L3 5.500Z" fill="#000"/></svg><div class="gripv" style="left:601px;top:787px;width:3px;height:19px;"></div>
<div class="tbh2" style="left:766px;top:782px;width:133px;height:30px;"></div><div class="chev" style="left:898px;top:782px;width:11px;height:30px;border-radius:0 4px 4px 0"></div><svg style="left:900px;top:803px;" width="7" height="7" viewBox="0 0 7 7"><path d="M0 0H6" stroke="#000" stroke-width="1"/><path d="M0 2.500H6L3 5.500Z" fill="#000"/></svg><div class="gripv" style="left:770px;top:787px;width:3px;height:19px;"></div>
<svg style="left:901px;top:787px;" width="7" height="5" viewBox="0 0 7 5"><path d="M0 0l2.500 2.500-2.500 2.500zM3.500 0l2.500 2.500-2.500 2.500z" fill="#000"/></svg>
<svg style="left:75px;top:789px;" width="16" height="16" viewBox="0 0 16 16"><path d="M1 14.500l14-13" stroke="#70728a" stroke-width="1.300"/></svg>
<svg style="left:93px;top:796px;" width="6" height="3" viewBox="0 0 7 3.500"><path d="M0 0h7l-3.500 3.500z" fill="#000"/></svg>
<svg style="left:108px;top:789px;" width="16" height="16" viewBox="0 0 16 16"><path d="M1 12h3v3h-3zM5.500 8h3v3h-3zM9 4h3v3h-3zM13 1h2.500v2.500h-2.500z" fill="#70728a"/></svg>
<svg style="left:125px;top:796px;" width="6" height="3" viewBox="0 0 7 3.500"><path d="M0 0h7l-3.500 3.500z" fill="#000"/></svg>
<svg style="left:138px;top:789px;" width="16" height="16" viewBox="0 0 16 16"><path d="M2 13.500l12-11" stroke="#70728a" stroke-width="1.300"/><path d="M.5 12h3v3h-3zM6.500 6.500h3v3h-3zM12.500 1h3v3h-3z" fill="#70728a"/></svg>
<svg style="left:155px;top:796px;" width="6" height="3" viewBox="0 0 7 3.500"><path d="M0 0h7l-3.500 3.500z" fill="#000"/></svg>
<svg style="left:168px;top:789px;" width="16" height="16" viewBox="0 0 16 16"><path d="M1.500 15.500v-9h4v9M5.500 15.500v-14h4v14M9.500 15.500v-10h4v10" fill="#b9bbcf" stroke="#70728a"/><path d="M0 15.500h16" stroke="#70728a"/></svg>
<svg style="left:186px;top:796px;" width="6" height="3" viewBox="0 0 7 3.500"><path d="M0 0h7l-3.500 3.500z" fill="#000"/></svg>
<svg style="left:199px;top:789px;" width="16" height="16" viewBox="0 0 16 16"><rect x=".5" y=".5" width="15" height="15" fill="#f4f4fa" stroke="#70728a"/><path d="M.5 15.500l7-9 3 3.500 5-9.500M.5 .5l15 15" fill="none" stroke="#70728a"/></svg>
<svg style="left:217px;top:796px;" width="6" height="3" viewBox="0 0 7 3.500"><path d="M0 0h7l-3.500 3.500z" fill="#000"/></svg>
<svg style="left:231px;top:789px;" width="16" height="16" viewBox="0 0 16 16"><path d="M8 0v3M8 8v-1M8 12v4M4 .5h8M4 15.500h8M3.500 7.500h9" stroke="#a9abbd"/><rect x="3.500" y="3.500" width="9" height="8" fill="none" stroke="#a9abbd"/></svg>
<svg style="left:248px;top:796px;" width="6" height="3" viewBox="0 0 7 3.500"><path d="M0 0h7l-3.500 3.500z" fill="#000"/></svg>
<svg style="left:261px;top:789px;" width="16" height="16" viewBox="0 0 16 16"><path d="M0 15.500v-9l5 5 4-6 3 3 4-5v12z" fill="#70728a"/></svg>
<svg style="left:279px;top:796px;" width="6" height="3" viewBox="0 0 7 3.500"><path d="M0 0h7l-3.500 3.500z" fill="#000"/></svg>
<svg style="left:292px;top:789px;" width="16" height="16" viewBox="0 0 16 16"><path d="M1.500 0v16" stroke="#70728a" stroke-dasharray="1 1"/><circle cx="9" cy="8" r="6.500" fill="none" stroke="#70728a"/><text x="9" y="11.500" font-size="10" text-anchor="middle" fill="#70728a" font-family="Liberation Sans,sans-serif">r</text></svg>
<svg style="left:310px;top:796px;" width="6" height="3" viewBox="0 0 7 3.500"><path d="M0 0h7l-3.500 3.500z" fill="#000"/></svg>
<svg style="left:323px;top:789px;" width="16" height="16" viewBox="0 0 16 16"><path d="M4.500 0v16M11.500 2v14" stroke="#70728a"/><rect x="2.500" y="3.500" width="4" height="8" fill="#f4f4fa" stroke="#70728a"/><rect x="9.500" y="5.500" width="4" height="7" fill="#70728a" stroke="#70728a"/></svg>
<svg style="left:341px;top:796px;" width="6" height="3" viewBox="0 0 7 3.500"><path d="M0 0h7l-3.500 3.500z" fill="#000"/></svg>
<svg style="left:355px;top:789px;" width="16" height="16" viewBox="0 0 16 16"><path d="M1.500 4.500l3-3h10v10l-3 3h-10z" fill="#d8d9e6" stroke="#70728a"/><path d="M1.500 4.500h10v10M11.500 4.500l3-3" fill="none" stroke="#70728a"/><rect x="4" y="6.500" width="6" height="6" fill="#9a9cb0"/></svg>
<svg style="left:399px;top:789px;" width="16" height="16" viewBox="0 0 16 16"><path d="M2.500 15.500v-9l3-3h3v9l-3 3zM7.500 13v-9l3-3h3v9l-3 3z" fill="#c9cadb" stroke="#70728a"/><path d="M2.500 6.500h3v9M5.500 6.500l3-3M7.500 4h3v9M10.500 4l3-3" fill="none" stroke="#70728a"/></svg>
<svg style="left:418px;top:796px;" width="6" height="3" viewBox="0 0 7 3.500"><path d="M0 0h7l-3.500 3.500z" fill="#000"/></svg>
<svg style="left:437px;top:789px;" width="16" height="16" viewBox="0 0 16 16"><path d="M1.500 13.500l4-9h10l-4 9z" fill="#9a9cb0" stroke="#70728a"/><path d="M1.500 13.500v-3l4-9h10v3" fill="#d8d9e6" stroke="#70728a"/></svg>
<svg style="left:457px;top:796px;" width="6" height="3" viewBox="0 0 7 3.500"><path d="M0 0h7l-3.500 3.500z" fill="#000"/></svg>
<svg style="left:468px;top:789px;" width="16" height="16" viewBox="0 0 16 16"><path d="M1.500 14.500v-9l4-4h10v9l-4 4z" fill="#f0f0f8" stroke="#70728a"/><path d="M1.500 5.500h10v9M11.500 5.500l4-4" fill="none" stroke="#70728a"/><circle cx="5" cy="10" r="1.300" fill="#70728a"/><circle cx="8.500" cy="8" r="1.300" fill="#70728a"/><circle cx="12.500" cy="5" r="1" fill="#70728a"/></svg>
<svg style="left:488px;top:796px;" width="6" height="3" viewBox="0 0 7 3.500"><path d="M0 0h7l-3.500 3.500z" fill="#000"/></svg>
<svg style="left:500px;top:789px;" width="16" height="16" viewBox="0 0 16 16"><rect x=".5" y="1.500" width="15" height="13" fill="#9a9cb0"/><path d="M.5 5.500h15M.5 9.500h15M4.500 1.500v13M8.500 1.500v13M12.500 1.500v13" stroke="#e6e6f0"/></svg>
<svg style="left:520px;top:796px;" width="6" height="3" viewBox="0 0 7 3.500"><path d="M0 0h7l-3.500 3.500z" fill="#000"/></svg>
<svg style="left:530px;top:789px;" width="16" height="16" viewBox="0 0 16 16"><path d="M2 5l2.500-3 2 2 2-3 2 3 2-2 2 3" fill="none" stroke="#70728a"/><rect x=".5" y="6.500" width="15" height="8" fill="#b9bbcf" stroke="#70728a"/><path d="M.5 10.500h15M5.500 6.500v8M10.500 6.500v8" stroke="#f0f0f8"/></svg>
<svg style="left:550px;top:796px;" width="6" height="3" viewBox="0 0 7 3.500"><path d="M0 0h7l-3.500 3.500z" fill="#000"/></svg>
<svg style="left:563px;top:789px;" width="16" height="16" viewBox="0 0 16 16"><rect x=".5" y=".5" width="15" height="15" fill="#9a9cb0" stroke="#70728a"/><path d="M2 2h12v12" fill="none" stroke="#b9bbcf"/></svg>
<svg style="left:607px;top:789px;" width="16" height="16" viewBox="0 0 16 16"><rect x="1.500" y="1.500" width="13" height="11" rx="1" fill="#d8d9e6" stroke="#a0a2b6"/><path d="M4 5h2M10 5h2M5 9c1.500 1.500 4.500 1.500 6 0" stroke="#8486a0" fill="none" stroke-width="1.200"/><path d="M0 14.500h16" stroke="#a0a2b6" stroke-dasharray="1 1"/></svg>
<svg style="left:630px;top:789px;" width="16" height="16" viewBox="0 0 16 16"><rect x="1.500" y="1.500" width="13" height="11" rx="1" fill="#b9bbcf" stroke="#8d8fa6"/><path d="M3 3l10 8M13 3l-10 8" stroke="#70728a" stroke-width="1.200"/><path d="M2 15.500v-3M14 15.500v-3" stroke="#70728a" stroke-width="2"/></svg>
<svg style="left:659px;top:789px;" width="16" height="16" viewBox="0 0 16 16"><path d="M2.500 1.500h11v7c0 4-3 6-5.500 6s-5.500-2-5.500-6z" fill="#c9cadb" stroke="#70728a" stroke-width="1.200"/><path d="M5 5.500h2M9 5.500h2M5.500 9.500c1.500 1.500 3.500 1.500 5 0" stroke="#70728a" fill="none" stroke-width="1.200"/></svg>
<svg style="left:681px;top:789px;" width="16" height="16" viewBox="0 0 16 16"><path d="M1 4h2v2h-2zM5 4h2v2h-2zM9 4h2v2h-2zM1 9h2v2h-2zM5 9h2v2h-2zM9 9h2v2h-2z" fill="#8d8fa6"/><path d="M13.500 1v14M11.500 4l2-3 2 3M11.500 12l2 3 2-3" fill="none" stroke="#555" stroke-width="1.200"/></svg>
<svg style="left:704px;top:789px;" width="16" height="16" viewBox="0 0 16 16"><path d="M1 4h2v2h-2zM5 4h2v2h-2zM9 4h2v2h-2zM1 9h2v2h-2zM5 9h2v2h-2zM9 9h2v2h-2z" fill="#e00000"/><path d="M0 7.500h12" stroke="#e00000" stroke-dasharray="2 1"/><path d="M13.500 1v14M11.500 4l2-3 2 3M11.500 12l2 3 2-3" fill="none" stroke="#000" stroke-width="1.200"/></svg>
<svg style="left:734px;top:789px;" width="16" height="16" viewBox="0 0 16 16"><path d="M1 4h2v2h-2zM5 4h2v2h-2zM9 4h2v2h-2zM1 9h2v2h-2zM5 9h2v2h-2zM9 9h2v2h-2z" fill="#000"/><path d="M6 7.500h5" stroke="#e00000" stroke-width="1.500"/><path d="M13.500 1v14M11.500 4l2-3 2 3M11.500 12l2 3 2-3" fill="none" stroke="#000" stroke-width="1.200"/></svg>
<div class="sep" style="left:653px;top:786px;width:1px;height:22px;"></div>
<div class="sep" style="left:726px;top:786px;width:1px;height:22px;"></div>
<div class="sep" style="left:432px;top:786px;width:1px;height:22px;"></div>
<svg style="left:779px;top:789px;" width="16" height="16" viewBox="0 0 16 16"><rect x="5" y="1" width="5" height="14" fill="#e8000a" stroke="#900" stroke-width=".6"/><path d="M1 8c0 4 4 5 7 5s7-1.500 7-5" fill="none" stroke="#1a2fd0" stroke-width="1.800"/><path d="M12.500 4.500l3.500 3.500-4 .5z" fill="#1a2fd0"/></svg>
<svg style="left:800px;top:789px;" width="16" height="16" viewBox="0 0 16 16"><rect x="6" y="1" width="5" height="14" fill="#e8000a" stroke="#900" stroke-width=".6"/><path d="M15 8c0 4-4 5-7 5s-7-1.500-7-5" fill="none" stroke="#1a2fd0" stroke-width="1.800"/><path d="M3.500 4.500l-3.500 3.500 4 .5z" fill="#1a2fd0"/></svg>
<svg style="left:823px;top:789px;" width="16" height="16" viewBox="0 0 16 16"><path d="M1 2.500l5-1.500 2.500 13-5 1.500z" fill="#e8000a" stroke="#900" stroke-width=".6"/><path d="M9 5h7" stroke="#1a2fd0" stroke-width="2"/><path d="M12 1.500l-4 3.500 4 3.500z" fill="#1a2fd0"/></svg>
<svg style="left:845px;top:789px;" width="16" height="16" viewBox="0 0 16 16"><path d="M15 2.500l-5-1.500-2.500 13 5 1.500z" fill="#e8000a" stroke="#900" stroke-width=".6"/><path d="M7 5h-7" stroke="#1a2fd0" stroke-width="2"/><path d="M4 1.500l4 3.500-4 3.500z" fill="#1a2fd0"/></svg>
<svg style="left:867px;top:789px;" width="16" height="16" viewBox="0 0 16 16"><path d="M4 3h8l3 8h-14z" fill="#e8000a" stroke="#900" stroke-width=".6"/><rect x="0" y="12" width="16" height="3.500" fill="#e8000a"/><path d="M8 0v6" stroke="#1a2fd0" stroke-width="2"/><path d="M4.500 5h7l-3.500 4z" fill="#1a2fd0"/></svg>
<span class="t" style="left:48px;top:821px;font-size:16px;letter-spacing:3px">&lt;&lt;</span>
<span class="t" style="left:72.5px;top:821px;font-size:16.6px;">最近打开的文件 <i style="font-style:normal;font-size:15.500px;margin-left:2px">(Ctrl+F1)</i></span>
<span class="t" style="left:508px;top:821px;font-size:16px;">--</span>
<span class="t" style="left:537px;top:821px;font-size:15.5px;letter-spacing:-.4px">AU : 开</span>
<span class="t" style="left:597px;top:821px;font-size:15.3px;">Light Grids</span>
<span class="t" style="left:684px;top:821px;font-size:15.6px;">2:[Book1]Sheet1!Col("2023年")[1:6]</span>
<span class="t" style="left:942px;top:821px;font-size:15.6px;">23KB - [Graph1]1!</span>
<span class="t" style="left:1079px;top:821px;font-size:16.3px;">弧度</span>
<div style="left:529px;top:816px;width:1px;height:24px;background:#d4d4d4"></div>
<div style="left:591px;top:816px;width:1px;height:24px;background:#d4d4d4"></div>
<div style="left:678px;top:816px;width:1px;height:24px;background:#d4d4d4"></div>
<div style="left:936px;top:816px;width:1px;height:24px;background:#d4d4d4"></div>
<div style="left:1074px;top:816px;width:1px;height:24px;background:#d4d4d4"></div>
<div style="left:1119px;top:816px;width:1px;height:24px;background:#d4d4d4"></div>
<svg style="left:1127px;top:828px;" width="13" height="13" viewBox="0 0 13 13"><path d="M8.500 0h2.800v2.800h-2.800zM8.500 4.200h2.800v2.800h-2.800zM4.300 4.200h2.800v2.800h-2.800zM8.500 8.400h2.800v2.800h-2.800zM4.300 8.400h2.800v2.800h-2.800zM.1 8.400h2.800v2.800h-2.800z" fill="#bfbfbf"/></svg>
<svg style="left:87px;top:217px" width="719" height="510" viewBox="87 217 719 510"><defs>
<linearGradient id="gr" x1="0" x2="1" y1="0" y2="0"><stop offset="0" stop-color="#c40000"/><stop offset=".28" stop-color="#ff0000"/><stop offset=".6" stop-color="#fb0000"/><stop offset="1" stop-color="#9c0000"/></linearGradient>
<linearGradient id="gg" x1="0" x2="1" y1="0" y2="0"><stop offset="0" stop-color="#00c400"/><stop offset=".28" stop-color="#00ff00"/><stop offset=".6" stop-color="#00fb00"/><stop offset="1" stop-color="#009c00"/></linearGradient>
<linearGradient id="gb" x1="0" x2="1" y1="0" y2="0"><stop offset="0" stop-color="#0000c4"/><stop offset=".28" stop-color="#0000ff"/><stop offset=".6" stop-color="#0000fb"/><stop offset="1" stop-color="#00009c"/></linearGradient>
</defs><path d="M246.2 571.8L441.0 472.6M275.1 592.7L469.9 488.3M304.1 613.5L498.7 504.0M335.3 636.0L529.8 520.9M366.1 658.2L560.4 537.6M400.1 682.7L594.2 556.0M456.5 671.0L274.2 542.6M523.4 627.0L338.0 510.2M585.5 586.1L397.4 480.0" stroke="#d4d4d4" stroke-width="1" fill="none"/><path d="M234 563L427 465L614.5 567L418.5 696Z" stroke="#000" stroke-width="1.1" fill="none"/><path d="M246.2 571.8l-3.8 2.5M275.1 592.7l-3.8 2.5M304.1 613.5l-3.8 2.5M335.3 636.0l-3.8 2.5M366.1 658.2l-3.8 2.5M400.1 682.7l-3.8 2.5M260.7 582.2l-2.3 1.5M289.6 603.1l-2.3 1.5M319.7 624.8l-2.3 1.5M350.7 647.1l-2.3 1.5M383.1 670.5l-2.3 1.5M415.7 694.0l-2.3 1.5M456.5 671.0l3.7 2.6M523.4 627.0l3.7 2.6M585.5 586.1l3.7 2.6M489.9 649.0l2.3 1.6M554.4 606.5l2.3 1.6M422.4 693.4l2.3 1.6M614.5 567.0l2.3 1.6" stroke="#000" stroke-width="1" fill="none"/><text x="238.5" y="578" font-size="8" text-anchor="middle" dominant-baseline="middle" transform="rotate(-52 238.5 578)" class="sf">F</text><text x="268" y="598" font-size="8" text-anchor="middle" dominant-baseline="middle" transform="rotate(-52 268 598)" class="sf">E</text><text x="296.5" y="618.5" font-size="8" text-anchor="middle" dominant-baseline="middle" transform="rotate(-52 296.5 618.5)" class="sf">D</text><text x="326.5" y="640.5" font-size="8" text-anchor="middle" dominant-baseline="middle" transform="rotate(-52 326.5 640.5)" class="sf">C</text><text x="359" y="664" font-size="8" text-anchor="middle" dominant-baseline="middle" transform="rotate(-52 359 664)" class="sf">B</text><text x="392.5" y="689" font-size="8" text-anchor="middle" dominant-baseline="middle" transform="rotate(-52 392.5 689)" class="sf">A</text><text x="301.5" y="635" font-size="9.5" text-anchor="middle" dominant-baseline="middle" transform="rotate(37 301.5 635)" class="sf">产品</text><text x="461" y="674.5" font-size="9" dominant-baseline="middle" transform="rotate(36 461 674.5)" class="sf">2022年</text><text x="527.5" y="631.5" font-size="9" dominant-baseline="middle" transform="rotate(36 527.5 631.5)" class="sf">2023年</text><text x="589.5" y="589.5" font-size="9" dominant-baseline="middle" transform="rotate(36 589.5 589.5)" class="sf">2024年</text><path d="M410.5 322L424.8 488.6A12.9 5.4 0 0 1 399 488.6Z" fill="url(#gb)"/><path d="M441.2 309L453.8 504.7A13.4 5.6 0 0 1 427 504.7Z" fill="url(#gb)"/><path d="M472.4 383.7L484 522.2A13.8 5.8 0 0 1 456.4 522.2Z" fill="url(#gb)"/><path d="M506.3 379.2L514.7 540.5A13.9 5.8 0 0 1 487 540.5Z" fill="url(#gb)"/><path d="M542.5 367.4L547 559.6A14.0 5.9 0 0 1 519 559.6Z" fill="url(#gb)"/><path d="M581.6 357.2L581.6 578.8A14.8 6.2 0 0 1 552 578.8Z" fill="url(#gb)"/><path d="M346.5 411L364.4 521.2A13.8 5.8 0 0 1 336.8 521.2Z" fill="url(#gg)"/><path d="M375.4 416.5L393 539.1A14.0 5.9 0 0 1 365 539.1Z" fill="url(#gg)"/><path d="M407 459.7L422.6 558.0A14.4 6.0 0 0 1 393.8 558.0Z" fill="url(#gg)"/><path d="M439.4 455.7L453.7 576.8A14.8 6.2 0 0 1 424.2 576.8Z" fill="url(#gg)"/><path d="M473.5 489.3L486.2 597.7A15.0 6.3 0 0 1 456.2 597.7Z" fill="url(#gg)"/><path d="M509.7 483.3L520.7 618.9A15.7 6.6 0 0 1 489.3 618.9Z" fill="url(#gg)"/><path d="M277.7 468.5L298.7 556.7A14.3 6.0 0 0 1 270 556.7Z" fill="url(#gr)"/><path d="M307.4 497L326.8 575.8A14.7 6.2 0 0 1 297.4 575.8Z" fill="url(#gr)"/><path d="M338.6 533L356 596.7A15.0 6.3 0 0 1 326 596.7Z" fill="url(#gr)"/><path d="M369 527L387 617.6A15.2 6.4 0 0 1 356.5 617.6Z" fill="url(#gr)"/><path d="M403 558.7L419.5 640.1A15.8 6.6 0 0 1 388 640.1Z" fill="url(#gr)"/><path d="M437.3 551.4L453.6 662.7A16.2 6.8 0 0 1 421.3 662.7Z" fill="url(#gr)"/><path d="M305 397L325 418L320 422.5L338.5 435.5L333.5 412.5L329 416Z" fill="#f23b41"/><text x="222" y="394" font-size="20.5" font-weight="bold" fill="#ee2a35" style="font-family:'Liberation Sans','Noto Sans CJK SC',sans-serif">双击锥体</text><rect x="646.5" y="245.5" width="76" height="45" fill="#fff" stroke="#000" stroke-width="1"/><rect x="649.7" y="248.60" width="25.8" height="12.3" fill="#ff0000" stroke="#7a7a7a" stroke-width=".7"/><text x="681.7" y="259.50" font-size="13" class="sf" letter-spacing=".1">2022年</text><rect x="649.7" y="263.15" width="25.8" height="12.3" fill="#00ff00" stroke="#7a7a7a" stroke-width=".7"/><text x="681.7" y="274.05" font-size="13" class="sf" letter-spacing=".1">2023年</text><rect x="649.7" y="277.70" width="25.8" height="12.3" fill="#0000ff" stroke="#7a7a7a" stroke-width=".7"/><text x="681.7" y="288.60" font-size="13" class="sf" letter-spacing=".1">2024年</text></svg>
</body></html>
